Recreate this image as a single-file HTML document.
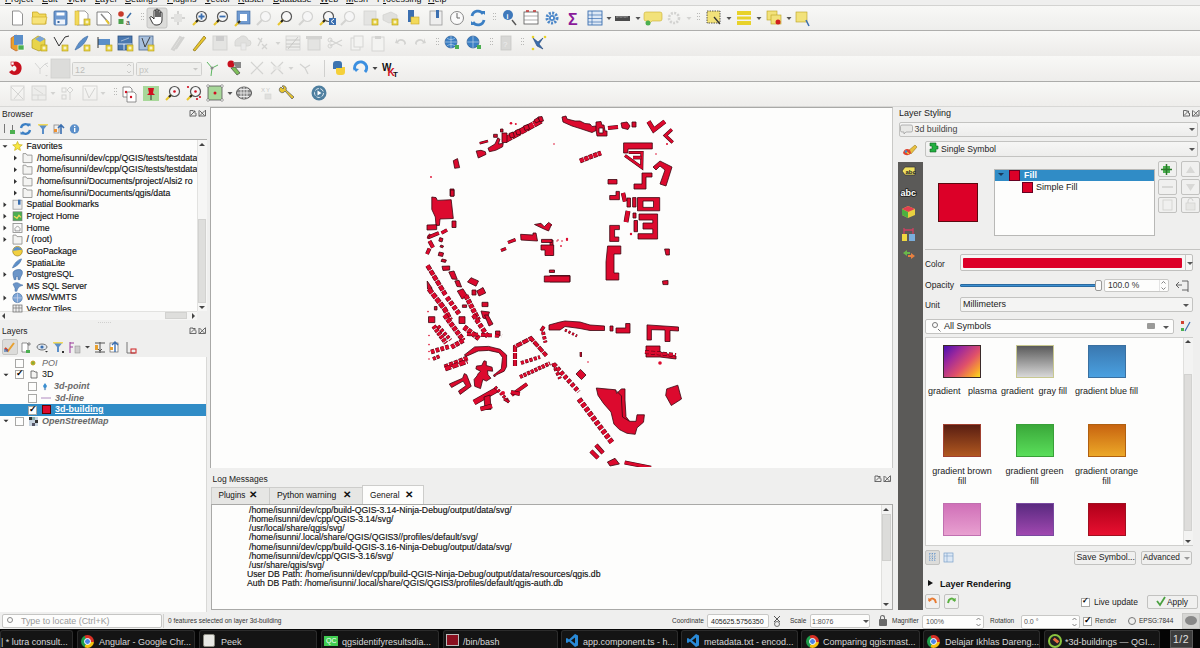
<!DOCTYPE html>
<html><head><meta charset="utf-8">
<style>
*{margin:0;padding:0;box-sizing:border-box}
html,body{width:1200px;height:648px;overflow:hidden;background:#efefee;font-family:"Liberation Sans",sans-serif;font-size:9px;color:#111}
.a{position:absolute}
.w{background:#fdfdfc}
.t{position:absolute;white-space:nowrap;line-height:1}
.hl{position:absolute;height:1px;background:#c9c9c7}
.vl{position:absolute;width:1px;background:#c9c9c7}
.fc,.fx{position:absolute;width:7px;height:7px;border:1px solid #777;border-top-color:#999}
.tri-u{position:absolute;width:0;height:0;border-left:3px solid transparent;border-right:3px solid transparent;border-bottom:3px solid #444}
.tri-d{position:absolute;width:0;height:0;border-left:3px solid transparent;border-right:3px solid transparent;border-top:3px solid #444}
.tri-l{position:absolute;width:0;height:0;border-top:3px solid transparent;border-bottom:3px solid transparent;border-right:3px solid #444}
.tri-r{position:absolute;width:0;height:0;border-top:3px solid transparent;border-bottom:3px solid transparent;border-left:3px solid #444}
.dd{position:absolute;width:0;height:0;border-left:3px solid transparent;border-right:3px solid transparent;border-top:3px solid #555}
.bt{position:absolute;left:0;width:197px;height:170px;overflow:hidden;font-size:8.7px;color:#111;-webkit-text-stroke:0.15px #111}
.cb{position:absolute;width:9px;height:9px;border:1px solid #a8a8a6;background:#fdfdfc}
.cb i{position:absolute;left:0px;top:-2px;font-style:normal;font-size:9px;color:#000;font-weight:bold;line-height:1}
.lg{position:absolute;font-size:8.7px;line-height:9.2px;color:#111;white-space:nowrap;-webkit-text-stroke:0.15px #111}
.btn{position:absolute;background:#f0f0ef;border:1px solid #c2c2c0;border-radius:2px}
.sw{position:absolute;width:37.5px;height:32.5px;border:1px solid #444}
.c{text-align:center;transform:translateX(-50%);line-height:10px}
.st{font-size:6.5px;color:#333}
.tb{position:absolute;top:630px;height:18px;background:#141414;border:1px solid #2c2c2c;border-bottom:none;border-radius:3px 3px 0 0}
.spin{position:absolute;width:7px;height:10px}
</style></head><body>
<!-- menu bar -->
<div class="t" style="left:5px;top:-5px;font-size:9px"><u>P</u>roject</div><div class="t" style="left:42px;top:-5px;font-size:9px"><u>E</u>dit</div><div class="t" style="left:67px;top:-5px;font-size:9px"><u>V</u>iew</div><div class="t" style="left:95px;top:-5px;font-size:9px"><u>L</u>ayer</div><div class="t" style="left:125px;top:-5px;font-size:9px"><u>S</u>ettings</div><div class="t" style="left:167px;top:-5px;font-size:9px"><u>P</u>lugins</div><div class="t" style="left:205px;top:-5px;font-size:9px"><u>V</u>ector</div><div class="t" style="left:238px;top:-5px;font-size:9px"><u>R</u>aster</div><div class="t" style="left:273px;top:-5px;font-size:9px"><u>D</u>atabase</div><div class="t" style="left:320px;top:-5px;font-size:9px"><u>W</u>eb</div><div class="t" style="left:346px;top:-5px;font-size:9px"><u>M</u>esh</div><div class="t" style="left:377px;top:-5px;font-size:9px">P<u>r</u>ocessing</div><div class="t" style="left:428px;top:-5px;font-size:9px"><u>H</u>elp</div>
<div class="a" style="left:0;top:5px;width:1200px;height:1px;background:#d3d3d1"></div>
<div class="a" style="left:0;top:6px;width:1200px;height:24px;background:linear-gradient(#f8f8f6,#eeeeec)"></div>
<div class="a" style="left:0;top:30px;width:1200px;height:1px;background:#aeaeac"></div>
<div class="a" style="left:0;top:31px;width:1200px;height:25px;background:linear-gradient(#f8f8f6,#ecebe9)"></div>
<div class="a" style="left:0;top:56px;width:1200px;height:25px;background:linear-gradient(#f8f8f6,#eeedeb)"></div>
<div class="a" style="left:0;top:81px;width:1200px;height:1px;background:#acacaa"></div>
<div class="a" style="left:0;top:82px;width:1200px;height:25px;background:linear-gradient(#f8f8f6,#eeedeb)"></div>
<div class="a" style="left:0;top:106px;width:1200px;height:1px;background:#d8d8d6"></div>
<!-- map canvas -->
<div class="a w" style="left:210px;top:107px;width:683px;height:361px;border-left:1px solid #a9a9a7;border-top:1px solid #a9a9a7;border-right:1px solid #c9c9c7"></div>

<svg class="a" style="left:0;top:0" width="1200" height="108" viewBox="0 0 1200 108"><path d="M12.5 11.0h7l3 3v11h-10z" fill="#fff" stroke="#777" stroke-width="0.8"/>
<path d="M32.5 12.0h5l1.5 2h7v10h-13.5z" fill="#f2d95a" stroke="#c9a824" stroke-width="0.8"/>
<path d="M32.0 17.0h15l-2 7h-13z" fill="#f7e37a" stroke="#c9a824" stroke-width="0.6"/>
<rect x="54.0" y="11.0" width="13" height="14" rx="1" fill="#6f9ad0" stroke="#3b679e" stroke-width="0.8"/>
<rect x="56.5" y="12.5" width="8" height="3" fill="#fff"/>
<rect x="56.0" y="19.5" width="9" height="5" fill="#eef3fa"/><rect x="57.5" y="21.0" width="2" height="2" fill="#3b679e"/>
<path d="M77 11h8l3 3v11h-11z" fill="#fff" stroke="#777" stroke-width="0.7"/><rect x="75" y="11" width="4" height="14" fill="#f2d95a" stroke="#c9a824" stroke-width="0.5"/>
<rect x="84.0" y="19.0" width="6" height="6" fill="#e8d44a" stroke="#b59a10" stroke-width="0.6"/>
<path d="M85.5 22.0h3M87.0 20.5v3" stroke="#fff" stroke-width="0.9"/>
<path d="M97 12h11l3 3v10h-14z" fill="#fff" stroke="#666" stroke-width="0.8"/><path d="M101 14l8 9" stroke="#888" stroke-width="1.5"/><path d="M106 20l3 4" stroke="#e8c62e" stroke-width="2"/>
<circle cx="121" cy="14" r="2.8" fill="#c83a2a"/><rect x="118.5" y="19" width="5" height="5" fill="#49a04a"/><path d="M127 18l4-5" stroke="#3a6fa8" stroke-width="1.5"/>
<text x="126.0" y="25.0" font-family="Liberation Sans" font-size="7" fill="#333" font-weight="normal">a</text>
<rect x="141" y="13" width="1" height="1" fill="#b9b9b7"/><rect x="143" y="13" width="1" height="1" fill="#b9b9b7"/>
<rect x="141" y="16" width="1" height="1" fill="#b9b9b7"/><rect x="143" y="16" width="1" height="1" fill="#b9b9b7"/>
<rect x="141" y="19" width="1" height="1" fill="#b9b9b7"/><rect x="143" y="19" width="1" height="1" fill="#b9b9b7"/>
<rect x="147.0" y="8.0" width="20" height="20" rx="2" fill="#dcdcda" stroke="#bdbdbb" stroke-width="0.8"/>
<path d="M154.0 19.0v-8c0-1.5 2-1.5 2 0v6v-7c0-1.5 2-1.5 2 0v7v-6c0-1.5 2-1.5 2 0v6v-4c0-1.5 2-1.5 2 0v7c0 3-2 5-5 5h-1c-2 0-3-1-4-3l-2-4c-.5-1 1-2 2-1z" fill="#fff" stroke="#222" stroke-width="0.9"/>
<path d="M178 11v14M171 18h14" stroke="#d3d3d1" stroke-width="2"/><rect x="174" y="14" width="8" height="8" fill="#e2e2e0"/>
<circle cx="201.5" cy="16.5" r="5" fill="#f6f6f6" stroke="#555" stroke-width="1.2"/>
<path d="M198.0 20.0l-5 5" stroke="#e8c62e" stroke-width="2.2"/><path d="M198.0 20.0l-2 2" stroke="#222" stroke-width="2.2"/>
<path d="M198.5 16.5h6M201.5 13.5v6" stroke="#3b6fb0" stroke-width="1.8"/>
<circle cx="222.5" cy="16.5" r="5" fill="#f6f6f6" stroke="#555" stroke-width="1.2"/>
<path d="M219.0 20.0l-5 5" stroke="#e8c62e" stroke-width="2.2"/><path d="M219.0 20.0l-2 2" stroke="#222" stroke-width="2.2"/>
<path d="M219.5 16.5h6" stroke="#3b6fb0" stroke-width="1.8"/>
<rect x="237" y="11" width="13" height="13" fill="#6f9ad0" stroke="#3b679e" stroke-width="0.6"/><rect x="240" y="14" width="7" height="7" fill="#fff"/><path d="M235 26l5-5" stroke="#e8c62e" stroke-width="2.2"/><path d="M238 23l2-2" stroke="#222" stroke-width="2"/>
<circle cx="265.5" cy="16.5" r="5" fill="#f6f6f6" stroke="#d3d3d1" stroke-width="1.2"/>
<path d="M262.0 20.0l-5 5" stroke="#d3d3d1" stroke-width="2.2"/>
<circle cx="286.5" cy="16.5" r="5" fill="#f6f6f6" stroke="#555" stroke-width="1.2"/>
<path d="M283.0 20.0l-5 5" stroke="#e8c62e" stroke-width="2.2"/><path d="M283.0 20.0l-2 2" stroke="#222" stroke-width="2.2"/>
<circle cx="307.5" cy="16.5" r="5" fill="#f6f6f6" stroke="#d3d3d1" stroke-width="1.2"/>
<path d="M304.0 20.0l-5 5" stroke="#d3d3d1" stroke-width="2.2"/>
<circle cx="328.5" cy="16.5" r="5" fill="#f6f6f6" stroke="#555" stroke-width="1.2"/>
<path d="M325.0 20.0l-5 5" stroke="#e8c62e" stroke-width="2.2"/><path d="M325.0 20.0l-2 2" stroke="#222" stroke-width="2.2"/>
<rect x="329" y="18" width="7" height="7" fill="#3b6fb0"/><path d="M334 19l-3 2.5l3 2.5" stroke="#fff" fill="none" stroke-width="1"/>
<circle cx="349.5" cy="16.5" r="5" fill="#f6f6f6" stroke="#d3d3d1" stroke-width="1.2"/>
<path d="M346.0 20.0l-5 5" stroke="#d3d3d1" stroke-width="2.2"/>
<rect x="364" y="11" width="12" height="14" fill="#e4e4e2" stroke="#d3d3d1" stroke-width="0.8"/>
<rect x="372.0" y="19.0" width="6" height="6" fill="#e8d44a" stroke="#b59a10" stroke-width="0.6"/>
<path d="M373.5 22.0h3M375.0 20.5v3" stroke="#fff" stroke-width="0.9"/>
<path d="M383 15l8-3l6 3v6l-8 2l-6-3z" fill="#e0e0de" stroke="#d3d3d1" stroke-width="0.8"/>
<rect x="392.0" y="19.0" width="6" height="6" fill="#e8d44a" stroke="#b59a10" stroke-width="0.6"/>
<path d="M393.5 22.0h3M395.0 20.5v3" stroke="#fff" stroke-width="0.9"/>
<path d="M408 10h6v12h-6z" fill="#3b6fb0"/><rect x="411" y="17" width="8" height="7" fill="#f2d95a" stroke="#c9a824" stroke-width="0.6"/>
<rect x="430" y="11" width="12" height="14" fill="#eee" stroke="#999" stroke-width="0.8"/><rect x="436" y="10" width="3" height="8" fill="#3b6fb0"/>
<circle cx="457" cy="18" r="6.5" fill="#fafafa" stroke="#888" stroke-width="1"/><path d="M457 13v5h3" stroke="#666" stroke-width="1" fill="none"/>
<path d="M472 16a6 6 0 0 1 11-2" stroke="#3b7fc4" stroke-width="2.8" fill="none"/><path d="M484 20a6 6 0 0 1-11 2" stroke="#3b7fc4" stroke-width="2.8" fill="none"/><path d="M481 11l4 0l0 4z M475 25l-4 0l0-4z" fill="#3b7fc4"/>
<rect x="493" y="13" width="1" height="1" fill="#b9b9b7"/><rect x="495" y="13" width="1" height="1" fill="#b9b9b7"/>
<rect x="493" y="16" width="1" height="1" fill="#b9b9b7"/><rect x="495" y="16" width="1" height="1" fill="#b9b9b7"/>
<rect x="493" y="19" width="1" height="1" fill="#b9b9b7"/><rect x="495" y="19" width="1" height="1" fill="#b9b9b7"/>
<circle cx="508" cy="15" r="5" fill="#3f79bb"/><text x="506.5" y="18.5" font-size="7" font-weight="bold" fill="#fff" font-family="Liberation Sans">i</text><path d="M512 20l4 5" stroke="#555" stroke-width="1.4"/>
<rect x="524" y="12" width="14" height="12" fill="#fff" stroke="#555" stroke-width="0.8"/><path d="M524 16h14M524 20h14" stroke="#777" stroke-width="0.6"/><path d="M526 11h3M533 11h3" stroke="#c03030" stroke-width="1.5"/>
<circle cx="552" cy="18" r="5" fill="none" stroke="#4a86c8" stroke-width="3" stroke-dasharray="2 1.3"/><circle cx="552" cy="18" r="3" fill="#4a86c8"/><circle cx="552" cy="18" r="1.2" fill="#fff"/>
<text x="568.0" y="25.0" font-family="Liberation Sans" font-size="16" fill="#8a1a9a" font-weight="bold">&#931;</text>
<rect x="588" y="11" width="14" height="14" fill="#dde8f5" stroke="#3b6fb0" stroke-width="0.9"/><path d="M588 15h14M588 18.5h14M588 22h14M592 11v14" stroke="#3b6fb0" stroke-width="0.7"/>
<path d="M606.5 17.0h5l-2.5 3z" fill="#555"/>
<rect x="615" y="16" width="15" height="5" fill="#4a4a4a"/><path d="M617 16v2M619 16v1.5M621 16v2M623 16v1.5M625 16v2M627 16v1.5" stroke="#ddd" stroke-width="0.6"/>
<path d="M635.5 17.0h5l-2.5 3z" fill="#555"/>
<path d="M646 12h14a2 2 0 0 1 2 2v5a2 2 0 0 1-2 2h-8l-3 3v-3h-3a2 2 0 0 1-2-2v-5a2 2 0 0 1 2-2z" fill="#f2e27a" stroke="#c9b030" stroke-width="0.6"/><circle cx="648" cy="23" r="2.5" fill="#4caf50"/>
<circle cx="674" cy="18" r="5" fill="none" stroke="#d3d3d1" stroke-width="2.6" stroke-dasharray="2 1.3"/>
<path d="M686.5 17.0h5l-2.5 3z" fill="#d3d3d1"/>
<rect x="697" y="13" width="1" height="1" fill="#b9b9b7"/><rect x="699" y="13" width="1" height="1" fill="#b9b9b7"/>
<rect x="697" y="16" width="1" height="1" fill="#b9b9b7"/><rect x="699" y="16" width="1" height="1" fill="#b9b9b7"/>
<rect x="697" y="19" width="1" height="1" fill="#b9b9b7"/><rect x="699" y="19" width="1" height="1" fill="#b9b9b7"/>
<rect x="707" y="11" width="13" height="12" fill="#f2e27a" stroke="#333" stroke-width="0.8" stroke-dasharray="1.5 1"/><path d="M714 17l6 7" stroke="#333" stroke-width="1.3"/>
<path d="M726.5 17.0h5l-2.5 3z" fill="#555"/>
<rect x="737" y="11" width="14" height="4" fill="#e8d22a"/><rect x="737" y="16.5" width="14" height="3" fill="#e8d22a"/><rect x="737" y="21" width="14" height="4" fill="#e8d22a"/>
<path d="M756.5 17.0h5l-2.5 3z" fill="#555"/>
<rect x="767" y="11" width="10" height="9" fill="#f2e27a" stroke="#b9a020" stroke-width="0.6"/><rect x="771" y="15" width="10" height="9" fill="#f2e27a" stroke="#b9a020" stroke-width="0.6"/><circle cx="778" cy="22" r="2.5" fill="#d02020"/>
<path d="M786.5 17.0h5l-2.5 3z" fill="#555"/>
<rect x="796" y="12" width="11" height="10" fill="#f2e27a" stroke="#b9a020" stroke-width="0.6"/><path d="M806 20l3 6" stroke="#3b6fb0" stroke-width="1.5"/>
<path d="M11 38l5-3l6 2v11l-6 3l-5-3z" fill="#e8a030" stroke="#b05020" stroke-width="0.6"/><rect x="14" y="35" width="9" height="10" fill="#5b8fc9"/><rect x="18" y="45" width="6" height="5" fill="#4caf50" stroke="#fff" stroke-width="0.6"/>
<path d="M32 40l6-4l7 3v9l-6 3l-7-3z" fill="#e8d44a" stroke="#a08a10" stroke-width="0.6"/><path d="M35 39l5-3l5 3l-5 3z" fill="#7aa4d6"/>
<rect x="41.0" y="45.0" width="6" height="6" fill="#e8d44a" stroke="#b59a10" stroke-width="0.6"/>
<path d="M42.5 48.0h3M44.0 46.5v3" stroke="#fff" stroke-width="0.9"/>
<path d="M54 37l5 9l6-9l4-1" stroke="#333" stroke-width="1" fill="none"/>
<rect x="62.0" y="45.0" width="6" height="6" fill="#e8d44a" stroke="#b59a10" stroke-width="0.6"/>
<path d="M63.5 48.0h3M65.0 46.5v3" stroke="#fff" stroke-width="0.9"/>
<path d="M75 50c3-7 7-12 13-14c-2 6-6 11-13 14z" fill="#5b8fc9" stroke="#3b679e" stroke-width="0.6"/>
<rect x="84.0" y="45.0" width="6" height="6" fill="#e8d44a" stroke="#b59a10" stroke-width="0.6"/>
<path d="M85.5 48.0h3M87.0 46.5v3" stroke="#fff" stroke-width="0.9"/>
<rect x="98" y="39" width="12" height="6" fill="#5b8fc9"/><path d="M98 37v11" stroke="#333" stroke-width="1"/>
<rect x="106.0" y="45.0" width="6" height="6" fill="#e8d44a" stroke="#b59a10" stroke-width="0.6"/>
<path d="M107.5 48.0h3M109.0 46.5v3" stroke="#fff" stroke-width="0.9"/>
<rect x="118" y="36" width="14" height="14" fill="#4a78b0" stroke="#2c5080" stroke-width="0.8"/><path d="M118 44h14M124 44v6" stroke="#fff" stroke-width="0.8"/><path d="M121 41l8-3" stroke="#bcd" stroke-width="0.8"/>
<rect x="127.0" y="45.0" width="6" height="6" fill="#e8d44a" stroke="#b59a10" stroke-width="0.6"/>
<path d="M128.5 48.0h3M130.0 46.5v3" stroke="#fff" stroke-width="0.9"/>
<rect x="139" y="36" width="14" height="14" fill="#a8c0dc" stroke="#4a6890" stroke-width="0.8"/><path d="M142 38l3 9l5-10" stroke="#333" stroke-width="0.9" fill="none"/>
<rect x="148.0" y="45.0" width="6" height="6" fill="#e8d44a" stroke="#b59a10" stroke-width="0.6"/>
<path d="M149.5 48.0h3M151.0 46.5v3" stroke="#fff" stroke-width="0.9"/>
<path d="M172 49l8-12l2 1l-8 12z M176 49l8-12" stroke="#d3d3d1" stroke-width="2" fill="none"/>
<path d="M193 50l11-14l2 2l-11 13z" fill="#e8c62e" stroke="#8a7010" stroke-width="0.7"/>
<rect x="213" y="36" width="14" height="14" fill="#e4e4e2" stroke="#d3d3d1" stroke-width="1"/><rect x="216" y="36" width="8" height="5" fill="#ccc"/>
<path d="M235 44a5 5 0 0 1 4-6a5 5 0 0 1 9 2a3 3 0 0 1 0 6h-13z" fill="#e0e0de" stroke="#d3d3d1" stroke-width="0.8"/><rect x="241" y="43" width="5" height="7" fill="#eaeaea" stroke="#d3d3d1" stroke-width="0.6"/>
<path d="M258 38l4 4M262 38l-4 8M262 44l5 5M267 44l-5 5" stroke="#d3d3d1" stroke-width="1.3"/>
<path d="M275.5 42.0h5l-2.5 3z" fill="#d3d3d1"/>
<rect x="286" y="36" width="14" height="14" fill="#ededeb" stroke="#d3d3d1" stroke-width="0.8"/><path d="M286 40h14M286 44h14M286 47h14M288 49l10-12" stroke="#c4c4c2" stroke-width="0.9"/>
<rect x="308" y="39" width="12" height="11" fill="#e4e4e2" stroke="#d3d3d1" stroke-width="1"/><rect x="306" y="36" width="16" height="3" fill="#d3d3d1"/>
<path d="M330 40l12 6M330 46l12-6" stroke="#d3d3d1" stroke-width="1.2"/><circle cx="330" cy="40" r="2" fill="none" stroke="#d3d3d1"/><circle cx="330" cy="46" r="2" fill="none" stroke="#d3d3d1"/>
<rect x="351" y="38" width="9" height="12" fill="#f3f3f1" stroke="#d3d3d1" stroke-width="0.9"/><rect x="354" y="36" width="9" height="11" fill="#f3f3f1" stroke="#d3d3d1" stroke-width="0.9"/>
<rect x="372" y="37" width="12" height="14" fill="#f3f3f1" stroke="#d3d3d1" stroke-width="0.9"/><rect x="375" y="36" width="6" height="3" fill="#d3d3d1"/>
<path d="M415 44a5 5 0 0 1 9-3v-3l2 5l-5 1l2-1a3 3 0 0 0-6 2z" fill="#d3d3d1"/>
<path d="M406 44a5 5 0 0 0-9-3v-3l-2 5l5 1l-2-1a3 3 0 0 1 6 2z" fill="#d3d3d1"/>
<rect x="436" y="38" width="1" height="1" fill="#b9b9b7"/><rect x="438" y="38" width="1" height="1" fill="#b9b9b7"/>
<rect x="436" y="41" width="1" height="1" fill="#b9b9b7"/><rect x="438" y="41" width="1" height="1" fill="#b9b9b7"/>
<rect x="436" y="44" width="1" height="1" fill="#b9b9b7"/><rect x="438" y="44" width="1" height="1" fill="#b9b9b7"/>
<circle cx="451" cy="42" r="6" fill="#3b7fc4" stroke="#1d4f8a" stroke-width="0.6"/><path d="M445 42h12M451 36v12M447 38c2 2 6 2 8 0M447 46c2-2 6-2 8 0" stroke="#cde" stroke-width="0.6" fill="none"/><rect x="455" y="45" width="4" height="4" fill="#4caf50"/>
<circle cx="473" cy="42" r="6" fill="#3b7fc4" stroke="#1d4f8a" stroke-width="0.6"/><path d="M467 42h12M473 36v12" stroke="#cde" stroke-width="0.6"/><rect x="477" y="45" width="4" height="4" fill="#4caf50"/>
<rect x="490" y="38" width="1" height="1" fill="#b9b9b7"/><rect x="492" y="38" width="1" height="1" fill="#b9b9b7"/>
<rect x="490" y="41" width="1" height="1" fill="#b9b9b7"/><rect x="492" y="41" width="1" height="1" fill="#b9b9b7"/>
<rect x="490" y="44" width="1" height="1" fill="#b9b9b7"/><rect x="492" y="44" width="1" height="1" fill="#b9b9b7"/>
<rect x="501" y="36" width="10" height="14" fill="#d8d8d6" stroke="#c8c8c6" stroke-width="0.8"/><text x="503" y="47" font-size="8" fill="#eee" font-family="Liberation Sans">?</text>
<rect x="521" y="38" width="1" height="1" fill="#b9b9b7"/><rect x="523" y="38" width="1" height="1" fill="#b9b9b7"/>
<rect x="521" y="41" width="1" height="1" fill="#b9b9b7"/><rect x="523" y="41" width="1" height="1" fill="#b9b9b7"/>
<rect x="521" y="44" width="1" height="1" fill="#b9b9b7"/><rect x="523" y="44" width="1" height="1" fill="#b9b9b7"/>
<path d="M533 38l5 4l5-4l-4 6l4 5l-6-3z" fill="#3b6fb0" stroke="#1d3f70" stroke-width="0.6"/><circle cx="533" cy="37" r="1.3" fill="#e8d22a"/><circle cx="545" cy="37" r="1.3" fill="#e8d22a"/><circle cx="533" cy="49" r="1.3" fill="#e8d22a"/>
<path d="M11 64c3-4 8-3 10 1c2 5-1 10-6 10c-3 0-5-2-6-3l3-2c1 1 2 2 3 1c2-1 2-4 0-5c-1-1-2 0-3 1z" fill="#c8101e"/><rect x="11" y="62" width="3" height="3" fill="#fff" stroke="#c8101e" stroke-width="0.6"/>
<path d="M35 63l5 6l5-5M40 69v5M45 64l3-1M45 64l3 3" stroke="#d3d3d1" stroke-width="0.9" fill="none"/>
<path d="M45 75h3l-1.5 1.5z" fill="#d3d3d1"/>
<rect x="51" y="59" width="19" height="19" fill="#dcdcda" stroke="#cfcfcd" stroke-width="0.8"/>
<rect x="72.5" y="62.5" width="61" height="13" rx="1" fill="#efefed" stroke="#d0d0ce" stroke-width="1"/>
<text x="75.0" y="72.5" font-family="Liberation Sans" font-size="9" fill="#bdbdbb" font-weight="normal">12</text>
<path d="M127 66l2-2l2 2M127 71l2 2l2-2" stroke="#c0c0be" stroke-width="0.8" fill="none"/>
<rect x="136.5" y="62.5" width="65" height="13" rx="1" fill="#efefed" stroke="#d0d0ce" stroke-width="1"/>
<text x="139.0" y="72.5" font-family="Liberation Sans" font-size="9" fill="#c4c4c2" font-weight="normal">px</text>
<path d="M193 68h5l-2.5 2.5z" fill="#c8c8c6"/>
<path d="M212 68l-5-6M212 68l6-3M212 68l-1 8" stroke="#4caf50" stroke-width="0.9"/><circle cx="212" cy="68" r="1.5" fill="#888"/>
<circle cx="231" cy="64" r="3.5" fill="#c8101e"/><path d="M233 62h8v6h-5z" fill="#888"/><path d="M231 68l6 7l3-2l-5-6z" fill="#7fbf5a" stroke="#333" stroke-width="0.6"/>
<path d="M251 62l12 12M263 62l-12 12" stroke="#d3d3d1" stroke-width="1.2"/>
<path d="M271 62l12 12M283 62l-12 12" stroke="#d3d3d1" stroke-width="1.2"/><path d="M273 68h8" stroke="#e8e8e6" stroke-width="3"/>
<path d="M288.5 67.0h5l-2.5 3z" fill="#d3d3d1"/>
<path d="M300 64l5 4l5-3M305 68l3 6" stroke="#d3d3d1" stroke-width="1.3" fill="none"/>
<rect x="324" y="60" width="1" height="17" fill="#d0d0ce"/>
<path d="M333 67v-3a3 3 0 0 1 3-3h3a3 3 0 0 1 3 3v4h-6v1h-3z" fill="#3c74b0"/><path d="M345 69v3a3 3 0 0 1-3 3h-3a3 3 0 0 1-3-3v-4h6v-1h3z" fill="#f5d03a"/>
<path d="M355 70a6 6 0 1 1 10 2" stroke="#3b8fe0" stroke-width="3" fill="none"/><path d="M353 68l3 4l3-3z" fill="#3b8fe0"/>
<path d="M372.5 67.0h5l-2.5 3z" fill="#444"/>
<text x="382.0" y="70.5" font-family="Liberation Sans" font-size="10" fill="#111" font-weight="bold">W</text>
<text x="387.5" y="76.0" font-family="Liberation Sans" font-size="10" fill="#d01020" font-weight="bold">K</text>
<text x="393.0" y="77.0" font-family="Liberation Sans" font-size="8" fill="#111" font-weight="bold">T</text>
<rect x="11" y="86" width="13" height="14" fill="none" stroke="#d3d3d1" stroke-width="0.9"/><path d="M11 87l12 12M14 99l10-12" stroke="#d3d3d1" stroke-width="1"/>
<rect x="32" y="86" width="14" height="14" fill="#ededeb" stroke="#d3d3d1" stroke-width="0.9"/><path d="M32 95h14M38 95v5M34 88l9 6" stroke="#d3d3d1" stroke-width="0.8"/>
<path d="M50.5 92.0h5l-2.5 3z" fill="#d3d3d1"/>
<rect x="62" y="88" width="4" height="4" fill="none" stroke="#d3d3d1"/><rect x="62" y="95" width="4" height="4" fill="none" stroke="#d3d3d1"/><path d="M70 87l3 3l-3 3l-3-3zM70 93v7" stroke="#d3d3d1" fill="none"/>
<rect x="83" y="86" width="14" height="14" fill="none" stroke="#d3d3d1" stroke-width="0.9"/><path d="M85 88l4 10l6-10" stroke="#d3d3d1" fill="none"/>
<path d="M100.5 92.0h5l-2.5 3z" fill="#d3d3d1"/>
<rect x="114" y="88" width="1" height="1" fill="#b9b9b7"/><rect x="116" y="88" width="1" height="1" fill="#b9b9b7"/>
<rect x="114" y="91" width="1" height="1" fill="#b9b9b7"/><rect x="116" y="91" width="1" height="1" fill="#b9b9b7"/>
<rect x="114" y="94" width="1" height="1" fill="#b9b9b7"/><rect x="116" y="94" width="1" height="1" fill="#b9b9b7"/>
<path d="M123 87h7l2 2v8h-9z" fill="#fff" stroke="#666" stroke-width="0.7"/><path d="M127 92h7l2 2v8h-9z" fill="#fff" stroke="#666" stroke-width="0.7"/><circle cx="126" cy="92" r="1.2" fill="#d01020"/><circle cx="131" cy="97" r="1.2" fill="#d01020"/>
<rect x="143" y="86" width="16" height="15" fill="#a8d89a"/><path d="M148 88h6l-1 5l2 2h-8l2-2z" fill="#d01020"/><path d="M151 95v5" stroke="#333" stroke-width="1"/>
<circle cx="174.5" cy="91.5" r="5" fill="#f6f6f6" stroke="#555" stroke-width="1.2"/>
<path d="M171.0 95.0l-5 5" stroke="#e8c62e" stroke-width="2.2"/><path d="M171.0 95.0l-2 2" stroke="#222" stroke-width="2.2"/>
<circle cx="174.5" cy="91.5" r="1.3" fill="#d01020"/>
<circle cx="195.5" cy="91.5" r="5" fill="#f6f6f6" stroke="#555" stroke-width="1.2"/>
<path d="M192.0 95.0l-5 5" stroke="#e8c62e" stroke-width="2.2"/><path d="M192.0 95.0l-2 2" stroke="#222" stroke-width="2.2"/>
<circle cx="195.5" cy="91.5" r="1.3" fill="#d01020"/>
<circle cx="188" cy="87" r="1.1" fill="#d01020"/><circle cx="197" cy="99" r="1.1" fill="#d01020"/><circle cx="200" cy="97" r="1.1" fill="#d01020"/>
<rect x="208" y="86" width="14" height="14" fill="#a8d89a" stroke="#555" stroke-width="0.8"/><circle cx="208" cy="86" r="1.3" fill="#fff" stroke="#555" stroke-width="0.5"/><circle cx="222" cy="86" r="1.3" fill="#fff" stroke="#555" stroke-width="0.5"/><circle cx="208" cy="100" r="1.3" fill="#fff" stroke="#555" stroke-width="0.5"/><circle cx="222" cy="100" r="1.3" fill="#fff" stroke="#555" stroke-width="0.5"/><circle cx="215" cy="93" r="1.5" fill="#d01020"/>
<path d="M227.5 92.0h5l-2.5 3z" fill="#555"/>
<ellipse cx="244" cy="93" rx="7.5" ry="6" fill="#888" stroke="#555" stroke-width="1"/><path d="M237 93h14M244 87v12M239 89.5h10M239 96.5h10M241 87.5v11M247 87.5v11" stroke="#eee" stroke-width="0.9"/>
<text x="261.0" y="92.0" font-family="Liberation Sans" font-size="6" fill="#c8c8c6" font-weight="normal">X</text>
<text x="266.0" y="92.0" font-family="Liberation Sans" font-size="6" fill="#c8c8c6" font-weight="normal">Y</text>
<rect x="265" y="94" width="6" height="5" fill="#e0e0de" stroke="#d3d3d1" stroke-width="0.6"/>
<path d="M281 87a3 3 0 1 0 4 4l7 8l2-2l-8-7a3 3 0 0 0-4-4l2 2l-1 1z" fill="#e8c62e" stroke="#555" stroke-width="0.7"/>
<circle cx="319" cy="93" r="7.5" fill="#4f7f9f"/><circle cx="319" cy="93" r="4.5" fill="none" stroke="#dde8f0" stroke-width="1" stroke-dasharray="4 1.5"/><path d="M317.5 90.5l4 2.5l-4 2.5z" fill="#fff"/></svg>
<svg class="a" style="left:0;top:0" width="1200" height="648" viewBox="0 0 1200 648"><defs><clipPath id="mc"><rect x="211" y="108" width="681" height="359"/></clipPath></defs><g clip-path="url(#mc)"><polyline points="505.0,140.0 520.0,132.0 530.0,126.5 541.0,120.5" fill="none" stroke="#3a0610" stroke-width="6.4" stroke-dasharray="7 0.7 9 0.7 6 0.7 8 0.7 20"/>
<polyline points="505.0,140.0 520.0,132.0 530.0,126.5 541.0,120.5" fill="none" stroke="#dc0a2e" stroke-width="5.4" stroke-dasharray="7 0.7 9 0.7 6 0.7 8 0.7 20"/>
<polygon points="502.0,133.0 507.0,133.0 507.0,142.5 502.0,142.5" fill="#dc0a2e" stroke="#3a0610" stroke-width="0.8"/>
<polygon points="509.0,133.5 513.0,132.0 514.5,137.0 510.5,138.0" fill="#dc0a2e" stroke="#3a0610" stroke-width="0.8"/>
<polygon points="515.5,130.5 519.5,129.0 521.0,134.0 517.0,135.0" fill="#dc0a2e" stroke="#3a0610" stroke-width="0.8"/>
<polygon points="523.5,126.0 528.0,124.5 529.5,129.0 525.0,130.5" fill="#dc0a2e" stroke="#3a0610" stroke-width="0.8"/>
<polygon points="534.0,120.0 538.0,117.5 540.0,121.0 536.0,123.0" fill="#dc0a2e" stroke="#3a0610" stroke-width="0.8"/>
<polygon points="538.0,117.0 542.0,116.5 543.5,121.0 540.0,122.0" fill="#dc0a2e" stroke="#3a0610" stroke-width="0.8"/>
<polygon points="488.0,148.2 495.0,144.0 497.8,137.8 499.9,139.2 498.5,144.0 503.3,143.3 502.6,146.8 495.7,150.3 489.4,151.7" fill="#dc0a2e" stroke="#3a0610" stroke-width="0.8"/>
<polygon points="476.2,151.0 481.0,150.3 485.3,151.7 486.0,154.4 478.3,158.0" fill="#dc0a2e" stroke="#3a0610" stroke-width="0.8"/>
<polyline points="479.7,143.3 488.0,141.0" fill="none" stroke="#3a0610" stroke-width="2.5"/>
<polyline points="479.7,143.3 488.0,141.0" fill="none" stroke="#dc0a2e" stroke-width="1.5"/>
<polygon points="493.6,134.3 497.3,134.3 497.3,137.3 493.6,137.3" fill="#dc0a2e" stroke="#3a0610" stroke-width="0.8"/>
<polygon points="500.5,129.0 503.0,129.0 503.0,132.0 500.5,132.0" fill="#dc0a2e" stroke="#3a0610" stroke-width="0.8"/>
<circle cx="511.0" cy="123.2" r="1.3" fill="#dc0a2e"/>
<circle cx="515.8" cy="123.9" r="1.0" fill="#dc0a2e"/>
<circle cx="554.0" cy="144.0" r="0.8" fill="#dc0a2e"/>
<polygon points="453.3,160.7 457.5,158.6 459.6,167.6 454.7,168.3" fill="#dc0a2e" stroke="#3a0610" stroke-width="0.8"/>
<circle cx="431.0" cy="177.0" r="0.9" fill="#dc0a2e"/>
<polygon points="450.0,189.0 454.0,189.0 454.0,196.0 450.0,196.0" fill="#dc0a2e" stroke="#3a0610" stroke-width="0.8"/>
<polygon points="562.0,117.0 566.0,116.0 567.0,119.0 575.0,121.0 580.0,121.0 585.0,123.5 590.0,124.0 592.0,126.5 596.0,126.0 597.0,130.0 592.0,132.5 580.0,128.5 572.0,126.0 563.0,122.0" fill="#dc0a2e" stroke="#3a0610" stroke-width="0.8"/>
<path d="M596 122L601 121.5L602 125L604 125L605 131L607 131L607 136L597 136L596 130ZM599 128L603 128L603 133L599 133Z" fill-rule="evenodd" fill="#dc0a2e" stroke="#3a0610" stroke-width="0.8"/>
<polyline points="608.0,128.0 618.0,127.0" fill="none" stroke="#3a0610" stroke-width="3.9"/>
<polyline points="608.0,128.0 618.0,127.0" fill="none" stroke="#dc0a2e" stroke-width="2.9"/>
<polygon points="621.0,123.0 627.0,122.0 630.0,126.0 628.0,129.5 622.0,128.0" fill="#dc0a2e" stroke="#3a0610" stroke-width="0.8"/>
<polygon points="632.0,122.0 636.0,122.0 636.0,127.0 632.0,127.0" fill="#dc0a2e" stroke="#3a0610" stroke-width="0.8"/>
<polyline points="648.5,121.5 653.7,130.0 664.8,121.5" fill="none" stroke="#3a0610" stroke-width="4.6"/>
<polyline points="648.5,121.5 653.7,130.0 664.8,121.5" fill="none" stroke="#dc0a2e" stroke-width="3.6"/>
<polyline points="671.8,129.4 665.3,135.5 672.7,142.4" fill="none" stroke="#3a0610" stroke-width="3.4"/>
<polyline points="671.8,129.4 665.3,135.5 672.7,142.4" fill="none" stroke="#dc0a2e" stroke-width="2.4"/>
<circle cx="667.0" cy="144.0" r="1.0" fill="#dc0a2e"/>
<polygon points="623.6,142.9 652.3,142.9 652.3,148.9 628.0,149.0 627.8,153.0 623.6,153.0" fill="#dc0a2e" stroke="#3a0610" stroke-width="0.8"/>
<polyline points="628.7,152.5 642.0,152.5 641.7,167.5 625.0,155.5" fill="none" stroke="#3a0610" stroke-width="3.2"/>
<polyline points="628.7,152.5 642.0,152.5 641.7,167.5 625.0,155.5" fill="none" stroke="#dc0a2e" stroke-width="2.2"/>
<polyline points="633.0,157.6 641.5,157.6" fill="none" stroke="#3a0610" stroke-width="3.6"/>
<polyline points="633.0,157.6 641.5,157.6" fill="none" stroke="#dc0a2e" stroke-width="2.6"/>
<polyline points="580.0,161.0 590.0,157.0 601.0,153.0" fill="none" stroke="#3a0610" stroke-width="4.9" stroke-dasharray="4 0.8"/>
<polyline points="580.0,161.0 590.0,157.0 601.0,153.0" fill="none" stroke="#dc0a2e" stroke-width="3.9" stroke-dasharray="4 0.8"/>
<circle cx="656.0" cy="154.0" r="0.8" fill="#dc0a2e"/>
<polygon points="653.0,167.0 660.0,161.0 672.0,167.0 666.0,186.0 660.0,184.0 665.0,170.0 660.0,166.0 656.0,170.0" fill="#dc0a2e" stroke="#3a0610" stroke-width="0.8"/>
<polygon points="642.0,173.0 652.0,173.0 652.0,177.0 646.0,177.0 646.0,189.0 634.0,189.0 634.0,184.0 642.0,184.0" fill="#dc0a2e" stroke="#3a0610" stroke-width="0.8"/>
<polygon points="608.0,179.5 617.0,179.5 617.0,184.0 608.0,184.0" fill="#dc0a2e" stroke="#3a0610" stroke-width="0.8"/>
<polygon points="609.7,195.5 616.0,195.5 616.0,191.4 619.4,191.4 619.4,199.7 609.7,199.7" fill="#dc0a2e" stroke="#3a0610" stroke-width="0.8"/>
<polyline points="623.0,193.0 625.0,201.5" fill="none" stroke="#3a0610" stroke-width="4.4"/>
<polyline points="623.0,193.0 625.0,201.5" fill="none" stroke="#dc0a2e" stroke-width="3.4"/>
<polygon points="627.0,198.0 630.5,198.0 630.5,207.0 627.0,207.0" fill="#dc0a2e" stroke="#3a0610" stroke-width="0.8"/>
<polygon points="632.6,197.6 636.0,197.6 636.0,207.0 632.6,207.0" fill="#dc0a2e" stroke="#3a0610" stroke-width="0.8"/>
<path d="M637.5 197.6H659.7V210.8H637.5ZM643 201V207.4H653.5V201Z" fill-rule="evenodd" fill="#dc0a2e" stroke="#3a0610" stroke-width="0.8"/>
<polyline points="628.0,211.0 626.0,222.0" fill="none" stroke="#3a0610" stroke-width="4.9"/>
<polyline points="628.0,211.0 626.0,222.0" fill="none" stroke="#dc0a2e" stroke-width="3.9"/>
<polygon points="633.0,213.0 636.0,213.0 636.0,218.0 633.0,218.0" fill="#dc0a2e" stroke="#3a0610" stroke-width="0.8"/>
<polygon points="639.0,214.0 657.6,214.0 657.6,239.0 638.0,239.0 638.0,233.7 652.8,233.7 652.8,229.0 643.0,229.0 643.0,223.0 652.8,223.0 652.8,220.0 639.0,220.0" fill="#dc0a2e" stroke="#3a0610" stroke-width="0.8"/>
<polygon points="634.0,220.5 637.5,220.5 637.5,231.7 634.0,231.7" fill="#dc0a2e" stroke="#3a0610" stroke-width="0.8"/>
<circle cx="631.0" cy="234.0" r="1.2" fill="#dc0a2e"/>
<polygon points="609.7,225.4 619.4,225.4 619.4,229.6 614.6,229.6 614.6,237.0 618.8,237.0 618.8,241.4 609.7,241.4" fill="#dc0a2e" stroke="#3a0610" stroke-width="0.8"/>
<polygon points="607.6,246.0 620.8,246.0 620.8,254.0 614.0,254.0 614.0,273.0 618.8,273.0 618.8,280.0 606.0,280.0 606.0,262.0" fill="#dc0a2e" stroke="#3a0610" stroke-width="0.8"/>
<polygon points="664.6,249.0 669.4,249.0 669.4,255.0 666.0,255.0" fill="#dc0a2e" stroke="#3a0610" stroke-width="0.8"/>
<circle cx="551.0" cy="225.0" r="1.0" fill="#dc0a2e"/>
<circle cx="558.0" cy="240.0" r="0.8" fill="#dc0a2e"/>
<circle cx="562.0" cy="241.0" r="0.8" fill="#dc0a2e"/>
<circle cx="567.0" cy="239.0" r="1.2" fill="#dc0a2e"/>
<circle cx="561.0" cy="246.0" r="0.8" fill="#dc0a2e"/>
<polygon points="550.0,240.0 553.0,240.0 553.0,255.0 550.0,255.0" fill="#dc0a2e" stroke="#3a0610" stroke-width="0.8"/>
<polygon points="550.0,275.5 570.0,275.5 570.0,281.8 550.0,281.8" fill="#dc0a2e" stroke="#3a0610" stroke-width="0.8"/>
<polygon points="662.5,281.0 668.0,280.4 668.0,284.6 663.0,284.6" fill="#dc0a2e" stroke="#3a0610" stroke-width="0.8"/>
<polyline points="501.0,250.5 506.0,248.5" fill="none" stroke="#3a0610" stroke-width="3.1"/>
<polyline points="501.0,250.5 506.0,248.5" fill="none" stroke="#dc0a2e" stroke-width="2.1"/>
<polyline points="508.0,242.5 515.5,239.6" fill="none" stroke="#3a0610" stroke-width="3.3"/>
<polyline points="508.0,242.5 515.5,239.6" fill="none" stroke="#dc0a2e" stroke-width="2.3"/>
<polygon points="520.6,234.3 533.0,235.0 533.0,233.0 536.0,233.0 537.5,241.0 521.0,240.0" fill="#dc0a2e" stroke="#3a0610" stroke-width="0.8"/>
<polygon points="534.5,224.5 541.0,223.3 544.3,226.7 548.6,222.4 551.5,224.5 548.6,231.0 544.3,229.2" fill="#dc0a2e" stroke="#3a0610" stroke-width="0.8"/>
<polygon points="541.5,239.4 552.0,239.4 552.0,242.5 541.5,242.5" fill="#dc0a2e" stroke="#3a0610" stroke-width="0.8"/>
<polygon points="541.0,245.0 553.7,245.0 553.7,255.5 545.0,255.5 545.0,250.0 541.0,250.0" fill="#dc0a2e" stroke="#3a0610" stroke-width="0.8"/>
<circle cx="557.0" cy="241.0" r="0.7" fill="#dc0a2e"/>
<circle cx="561.0" cy="246.0" r="0.7" fill="#dc0a2e"/>
<circle cx="567.0" cy="240.0" r="1.1" fill="#dc0a2e"/>
<polygon points="544.3,276.0 569.8,276.0 569.8,282.0 544.3,282.0" fill="#dc0a2e" stroke="#3a0610" stroke-width="0.8"/>
<polygon points="549.4,270.0 554.5,270.0 554.5,272.5 549.4,272.5" fill="#dc0a2e" stroke="#3a0610" stroke-width="0.8"/>
<polygon points="431.8,197.0 436.0,197.6 437.4,200.4 451.2,199.7 453.3,218.5 440.0,219.0 439.4,225.4 436.0,225.4 435.3,217.0 431.8,209.4" fill="#dc0a2e" stroke="#3a0610" stroke-width="0.8"/>
<polygon points="427.0,225.0 436.7,224.7 436.7,229.6 427.0,230.0" fill="#dc0a2e" stroke="#3a0610" stroke-width="0.8"/>
<polygon points="452.0,221.0 456.0,221.0 456.0,227.5 452.0,227.5" fill="#dc0a2e" stroke="#3a0610" stroke-width="0.8"/>
<polygon points="450.5,190.0 454.0,190.0 454.0,196.2 450.5,196.2" fill="#dc0a2e" stroke="#3a0610" stroke-width="0.8"/>
<polyline points="441.5,233.0 447.0,230.0" fill="none" stroke="#3a0610" stroke-width="3.7"/>
<polyline points="441.5,233.0 447.0,230.0" fill="none" stroke="#dc0a2e" stroke-width="2.7"/>
<polyline points="428.0,237.5 438.8,233.0" fill="none" stroke="#3a0610" stroke-width="3.9"/>
<polyline points="428.0,237.5 438.8,233.0" fill="none" stroke="#dc0a2e" stroke-width="2.9"/>
<polyline points="427.5,238.5 430.0,234.0" fill="none" stroke="#3a0610" stroke-width="1.9"/>
<polyline points="427.5,238.5 430.0,234.0" fill="none" stroke="#dc0a2e" stroke-width="0.9"/>
<polyline points="429.5,241.0 433.0,247.5" fill="none" stroke="#3a0610" stroke-width="4.1"/>
<polyline points="429.5,241.0 433.0,247.5" fill="none" stroke="#dc0a2e" stroke-width="3.1"/>
<polyline points="427.0,254.0 429.5,248.5" fill="none" stroke="#3a0610" stroke-width="3.9"/>
<polyline points="427.0,254.0 429.5,248.5" fill="none" stroke="#dc0a2e" stroke-width="2.9"/>
<polygon points="439.8,237.6 443.0,238.6 442.0,242.0 438.8,241.0" fill="#dc0a2e" stroke="#3a0610" stroke-width="0.8"/>
<polygon points="440.9,245.0 443.6,246.0 442.6,247.8 439.9,246.8" fill="#dc0a2e" stroke="#3a0610" stroke-width="0.8"/>
<polygon points="439.2,252.0 443.6,253.0 442.6,256.5 438.2,255.5" fill="#dc0a2e" stroke="#3a0610" stroke-width="0.8"/>
<polygon points="442.0,259.0 446.4,260.0 445.4,262.4 441.0,261.4" fill="#dc0a2e" stroke="#3a0610" stroke-width="0.8"/>
<polyline points="427.5,265.5 445.4,294.7" fill="none" stroke="#3a0610" stroke-width="4.7" stroke-dasharray="5 1"/>
<polyline points="427.5,265.5 445.4,294.7" fill="none" stroke="#dc0a2e" stroke-width="3.7" stroke-dasharray="5 1"/>
<polygon points="427.2,281.0 432.0,288.0 431.0,292.0 427.5,289.0" fill="#dc0a2e" stroke="#3a0610" stroke-width="0.8"/>
<polyline points="429.0,289.0 444.6,309.0 450.5,320.0" fill="none" stroke="#3a0610" stroke-width="5.1" stroke-dasharray="5 1"/>
<polyline points="429.0,289.0 444.6,309.0 450.5,320.0" fill="none" stroke="#dc0a2e" stroke-width="4.1" stroke-dasharray="5 1"/>
<polyline points="444.6,315.0 463.3,340.4" fill="none" stroke="#3a0610" stroke-width="5.1" stroke-dasharray="4 1"/>
<polyline points="444.6,315.0 463.3,340.4" fill="none" stroke="#dc0a2e" stroke-width="4.1" stroke-dasharray="4 1"/>
<polyline points="463.3,340.4 451.4,347.2" fill="none" stroke="#3a0610" stroke-width="4.9" stroke-dasharray="4 1"/>
<polyline points="463.3,340.4 451.4,347.2" fill="none" stroke="#dc0a2e" stroke-width="3.9" stroke-dasharray="4 1"/>
<polyline points="447.0,297.2 459.9,315.0" fill="none" stroke="#3a0610" stroke-width="4.9" stroke-dasharray="4 1.5"/>
<polyline points="447.0,297.2 459.9,315.0" fill="none" stroke="#dc0a2e" stroke-width="3.9" stroke-dasharray="4 1.5"/>
<polygon points="442.0,266.3 449.7,266.0 449.7,270.0 443.0,270.5" fill="#dc0a2e" stroke="#3a0610" stroke-width="0.8"/>
<polygon points="448.8,272.0 454.0,271.0 457.3,279.4 452.0,279.0" fill="#dc0a2e" stroke="#3a0610" stroke-width="0.8"/>
<polygon points="454.8,281.0 459.0,280.3 461.6,287.0 457.0,286.5" fill="#dc0a2e" stroke="#3a0610" stroke-width="0.8"/>
<polygon points="457.3,291.0 463.0,288.8 467.5,296.0 462.0,299.0" fill="#dc0a2e" stroke="#3a0610" stroke-width="0.8"/>
<polyline points="465.8,295.5 478.5,320.0" fill="none" stroke="#3a0610" stroke-width="5.1" stroke-dasharray="4 1"/>
<polyline points="465.8,295.5 478.5,320.0" fill="none" stroke="#dc0a2e" stroke-width="4.1" stroke-dasharray="4 1"/>
<polyline points="473.4,315.0 488.7,337.9" fill="none" stroke="#3a0610" stroke-width="4.9" stroke-dasharray="4 1.5"/>
<polyline points="473.4,315.0 488.7,337.9" fill="none" stroke="#dc0a2e" stroke-width="3.9" stroke-dasharray="4 1.5"/>
<polygon points="467.5,282.0 471.0,277.7 478.5,281.0 476.0,286.2" fill="#dc0a2e" stroke="#3a0610" stroke-width="0.8"/>
<polygon points="476.8,291.0 483.0,287.5 485.7,293.0 479.0,296.0" fill="#dc0a2e" stroke="#3a0610" stroke-width="0.8"/>
<polygon points="472.0,290.0 476.0,290.0 476.0,295.0 472.0,295.0" fill="#dc0a2e" stroke="#3a0610" stroke-width="0.8"/>
<polygon points="482.0,302.3 488.0,302.3 488.0,306.6 482.0,306.6" fill="#dc0a2e" stroke="#3a0610" stroke-width="0.8"/>
<polygon points="481.0,311.0 489.5,312.0 487.0,319.3 483.0,318.0" fill="#dc0a2e" stroke="#3a0610" stroke-width="0.8"/>
<polygon points="462.4,304.9 466.6,304.9 466.6,307.4 462.4,307.4" fill="#dc0a2e" stroke="#3a0610" stroke-width="0.8"/>
<circle cx="428.0" cy="311.6" r="0.8" fill="#dc0a2e"/>
<polygon points="434.4,306.5 437.0,306.5 437.0,310.0 434.4,310.0" fill="#dc0a2e" stroke="#3a0610" stroke-width="0.8"/>
<polygon points="428.5,316.7 434.8,316.7 434.8,322.6 428.5,322.6" fill="#dc0a2e" stroke="#3a0610" stroke-width="0.8"/>
<polygon points="459.0,316.7 465.0,316.7 465.0,323.5 459.0,323.5" fill="#dc0a2e" stroke="#3a0610" stroke-width="0.8"/>
<polyline points="464.0,327.0 479.4,338.8" fill="none" stroke="#3a0610" stroke-width="5.4" stroke-dasharray="4 1"/>
<polyline points="464.0,327.0 479.4,338.8" fill="none" stroke="#dc0a2e" stroke-width="4.4" stroke-dasharray="4 1"/>
<polygon points="484.5,315.0 488.0,315.0 493.0,324.0 489.0,326.0" fill="#dc0a2e" stroke="#3a0610" stroke-width="0.8"/>
<polygon points="495.5,331.0 500.0,331.0 500.0,336.0 495.5,336.0" fill="#dc0a2e" stroke="#3a0610" stroke-width="0.8"/>
<polyline points="433.6,326.0 446.0,343.0" fill="none" stroke="#3a0610" stroke-width="4.9" stroke-dasharray="3 1"/>
<polyline points="433.6,326.0 446.0,343.0" fill="none" stroke="#dc0a2e" stroke-width="3.9" stroke-dasharray="3 1"/>
<polyline points="438.0,326.0 450.5,340.0" fill="none" stroke="#3a0610" stroke-width="3.9" stroke-dasharray="3 1.5"/>
<polyline points="438.0,326.0 450.5,340.0" fill="none" stroke="#dc0a2e" stroke-width="2.9" stroke-dasharray="3 1.5"/>
<polyline points="431.0,352.0 449.7,346.4" fill="none" stroke="#3a0610" stroke-width="4.7" stroke-dasharray="3.5 1.5"/>
<polyline points="431.0,352.0 449.7,346.4" fill="none" stroke="#dc0a2e" stroke-width="3.7" stroke-dasharray="3.5 1.5"/>
<polyline points="433.0,359.0 440.0,356.0" fill="none" stroke="#3a0610" stroke-width="3.9" stroke-dasharray="3 1"/>
<polyline points="433.0,359.0 440.0,356.0" fill="none" stroke="#dc0a2e" stroke-width="2.9" stroke-dasharray="3 1"/>
<circle cx="429.0" cy="335.5" r="0.8" fill="#dc0a2e"/>
<circle cx="429.0" cy="344.6" r="0.8" fill="#dc0a2e"/>
<circle cx="429.0" cy="351.5" r="0.8" fill="#dc0a2e"/>
<circle cx="429.0" cy="359.0" r="0.8" fill="#dc0a2e"/>
<polyline points="444.6,367.0 467.5,358.0" fill="none" stroke="#3a0610" stroke-width="4.9" stroke-dasharray="4 1.2"/>
<polyline points="444.6,367.0 467.5,358.0" fill="none" stroke="#dc0a2e" stroke-width="3.9" stroke-dasharray="4 1.2"/>
<polygon points="464.3,355.0 474.7,346.9 488.6,346.4 500.2,349.3 506.6,355.0 506.6,366.6 504.2,371.2 496.7,374.7 494.4,377.0 493.5,375.0 495.6,373.6 501.3,368.9 502.5,357.4 499.0,352.7 488.6,350.4 478.2,351.0 466.6,356.2" fill="#dc0a2e" stroke="#3a0610" stroke-width="0.8"/>
<polygon points="484.0,360.8 486.3,361.4 486.3,365.5 492.1,367.2 492.7,371.2 487.5,370.7 488.0,374.7 490.9,378.2 486.3,381.1 482.8,379.4 480.5,388.6 474.7,386.3 474.1,379.4 477.0,375.9 478.2,373.6 480.5,371.2 475.9,368.9 476.5,366.0 481.7,365.5" fill="#dc0a2e" stroke="#3a0610" stroke-width="0.8"/>
<polyline points="515.0,366.0 515.0,346.7 531.0,338.3 546.4,355.7" fill="none" stroke="#3a0610" stroke-width="4.1" stroke-dasharray="6 1"/>
<polyline points="515.0,366.0 515.0,346.7 531.0,338.3 546.4,355.7" fill="none" stroke="#dc0a2e" stroke-width="3.1" stroke-dasharray="6 1"/>
<polyline points="521.0,363.0 540.0,357.0" fill="none" stroke="#3a0610" stroke-width="3.9" stroke-dasharray="3 1.5"/>
<polyline points="521.0,363.0 540.0,357.0" fill="none" stroke="#dc0a2e" stroke-width="2.9" stroke-dasharray="3 1.5"/>
<polyline points="520.0,377.0 550.0,363.3" fill="none" stroke="#3a0610" stroke-width="4.1" stroke-dasharray="3 1"/>
<polyline points="520.0,377.0 550.0,363.3" fill="none" stroke="#dc0a2e" stroke-width="3.1" stroke-dasharray="3 1"/>
<polyline points="511.7,395.0 527.0,384.0" fill="none" stroke="#3a0610" stroke-width="3.9"/>
<polyline points="511.7,395.0 527.0,384.0" fill="none" stroke="#dc0a2e" stroke-width="2.9"/>
<polyline points="474.1,402.5 496.7,389.8" fill="none" stroke="#3a0610" stroke-width="5.7"/>
<polyline points="474.1,402.5 496.7,389.8" fill="none" stroke="#dc0a2e" stroke-width="4.7"/>
<polygon points="484.0,397.0 490.0,395.0 491.0,409.4 485.0,409.4" fill="#dc0a2e" stroke="#3a0610" stroke-width="0.8"/>
<polyline points="480.5,409.0 492.0,406.0" fill="none" stroke="#3a0610" stroke-width="4.4"/>
<polyline points="480.5,409.0 492.0,406.0" fill="none" stroke="#dc0a2e" stroke-width="3.4"/>
<polyline points="495.0,387.0 509.0,402.0" fill="none" stroke="#3a0610" stroke-width="3.5" stroke-dasharray="2.5 1.5"/>
<polyline points="495.0,387.0 509.0,402.0" fill="none" stroke="#dc0a2e" stroke-width="2.5" stroke-dasharray="2.5 1.5"/>
<polygon points="449.3,384.0 462.6,378.2 464.3,373.6 466.6,374.7 471.2,386.3 460.2,394.4 458.5,391.0 466.0,385.7 463.1,381.1 451.6,387.5" fill="#dc0a2e" stroke="#3a0610" stroke-width="0.8"/>
<polyline points="445.2,368.9 467.2,361.4" fill="none" stroke="#3a0610" stroke-width="4.9" stroke-dasharray="6 1.5"/>
<polyline points="445.2,368.9 467.2,361.4" fill="none" stroke="#dc0a2e" stroke-width="3.9" stroke-dasharray="6 1.5"/>
<polyline points="467.0,334.0 502.0,336.0" fill="none" stroke="#3a0610" stroke-width="3.9" stroke-dasharray="4 3"/>
<polyline points="467.0,334.0 502.0,336.0" fill="none" stroke="#dc0a2e" stroke-width="2.9" stroke-dasharray="4 3"/>
<polyline points="543.0,332.0 545.5,342.5" fill="none" stroke="#3a0610" stroke-width="3.9" stroke-dasharray="3 1.5"/>
<polyline points="543.0,332.0 545.5,342.5" fill="none" stroke="#dc0a2e" stroke-width="2.9" stroke-dasharray="3 1.5"/>
<polyline points="553.0,363.3 560.0,378.6" fill="none" stroke="#3a0610" stroke-width="3.9" stroke-dasharray="3 2"/>
<polyline points="553.0,363.3 560.0,378.6" fill="none" stroke="#dc0a2e" stroke-width="2.9" stroke-dasharray="3 2"/>
<polygon points="549.0,325.0 560.0,322.0 565.0,321.0 580.0,322.0 590.0,325.0 604.5,326.0 604.5,330.5 590.0,330.5 580.0,328.5 565.0,326.5 560.0,330.0 549.0,330.0" fill="#dc0a2e" stroke="#3a0610" stroke-width="0.8"/>
<polyline points="541.0,331.0 544.0,326.5" fill="none" stroke="#3a0610" stroke-width="3.4"/>
<polyline points="541.0,331.0 544.0,326.5" fill="none" stroke="#dc0a2e" stroke-width="2.4"/>
<polyline points="565.0,330.0 577.0,336.0" fill="none" stroke="#3a0610" stroke-width="2.9" stroke-dasharray="2 2"/>
<polyline points="565.0,330.0 577.0,336.0" fill="none" stroke="#dc0a2e" stroke-width="1.9" stroke-dasharray="2 2"/>
<polygon points="610.0,326.0 613.0,326.0 613.0,331.0 610.0,331.0" fill="#dc0a2e" stroke="#3a0610" stroke-width="0.8"/>
<polygon points="625.7,323.5 630.0,323.5 630.0,333.0 616.0,333.0 616.0,328.0 625.7,328.0" fill="#dc0a2e" stroke="#3a0610" stroke-width="0.8"/>
<polygon points="647.0,324.9 678.5,327.0 678.5,331.0 670.0,330.5 670.0,341.5 665.0,341.5 665.0,330.0 651.4,329.7 651.4,340.0 647.0,340.0" fill="#dc0a2e" stroke="#3a0610" stroke-width="0.8"/>
<polygon points="646.0,346.0 660.0,346.0 660.0,352.0 676.0,356.0 676.0,359.0 660.0,357.0 646.0,357.0" fill="#dc0a2e" stroke="#3a0610" stroke-width="0.8"/>
<polyline points="581.0,352.0 581.0,357.0" fill="none" stroke="#3a0610" stroke-width="1.7"/>
<polyline points="581.0,352.0 581.0,357.0" fill="none" stroke="#dc0a2e" stroke-width="0.7"/>
<polygon points="596.3,388.0 615.7,389.8 616.7,393.5 621.3,388.9 625.0,388.9 625.0,400.0 626.0,416.7 629.6,421.3 636.0,421.3 637.0,414.8 644.4,414.8 643.5,422.2 637.0,427.8 635.2,434.3 626.9,433.3 619.4,429.6 613.9,424.0 611.0,412.0 603.7,403.7 598.0,395.4" fill="#dc0a2e" stroke="#3a0610" stroke-width="0.8"/>
<path d="M616 390.5L621.5 396L621.5 400L622.5 417L629.6 421.3" fill="none" stroke="#3a0610" stroke-width="0.8"/>
<polygon points="666.7,388.9 677.8,385.2 681.5,399.0 671.3,405.5 665.7,395.4" fill="#dc0a2e" stroke="#3a0610" stroke-width="0.8"/>
<polygon points="580.5,369.4 586.0,375.0 581.5,379.6 576.0,374.0" fill="#dc0a2e" stroke="#3a0610" stroke-width="0.8"/>
<polyline points="553.7,364.0 578.7,391.7" fill="none" stroke="#3a0610" stroke-width="4.7" stroke-dasharray="3.5 1.8"/>
<polyline points="553.7,364.0 578.7,391.7" fill="none" stroke="#dc0a2e" stroke-width="3.7" stroke-dasharray="3.5 1.8"/>
<polyline points="579.0,399.0 612.3,443.0" fill="none" stroke="#3a0610" stroke-width="5.5" stroke-dasharray="4 1.6"/>
<polyline points="579.0,399.0 612.3,443.0" fill="none" stroke="#dc0a2e" stroke-width="4.5" stroke-dasharray="4 1.6"/>
<polyline points="596.0,445.0 603.0,453.0" fill="none" stroke="#3a0610" stroke-width="4.4"/>
<polyline points="596.0,445.0 603.0,453.0" fill="none" stroke="#dc0a2e" stroke-width="3.4"/>
<polyline points="591.0,451.0 598.0,458.0" fill="none" stroke="#3a0610" stroke-width="4.4"/>
<polyline points="591.0,451.0 598.0,458.0" fill="none" stroke="#dc0a2e" stroke-width="3.4"/>
<polygon points="607.4,462.0 615.0,458.3 619.4,464.0 610.0,466.0" fill="#dc0a2e" stroke="#3a0610" stroke-width="0.8"/>
<polyline points="624.7,462.5 651.0,467.6" fill="none" stroke="#3a0610" stroke-width="3.9"/>
<polyline points="624.7,462.5 651.0,467.6" fill="none" stroke="#dc0a2e" stroke-width="2.9"/>
<polyline points="645.0,352.0 676.0,355.0" fill="none" stroke="#3a0610" stroke-width="3.9" stroke-dasharray="4 2"/>
<polyline points="645.0,352.0 676.0,355.0" fill="none" stroke="#dc0a2e" stroke-width="2.9" stroke-dasharray="4 2"/>
<circle cx="660.0" cy="363.0" r="1.8" fill="#dc0a2e"/>
<polyline points="511.0,392.0 519.8,394.0" fill="none" stroke="#3a0610" stroke-width="3.9"/>
<polyline points="511.0,392.0 519.8,394.0" fill="none" stroke="#dc0a2e" stroke-width="2.9"/>
<circle cx="503.0" cy="393.0" r="2.0" fill="#dc0a2e"/>
<polyline points="504.0,399.0 509.0,402.0" fill="none" stroke="#3a0610" stroke-width="2.7"/>
<polyline points="504.0,399.0 509.0,402.0" fill="none" stroke="#dc0a2e" stroke-width="1.7"/>
<circle cx="588.0" cy="362.0" r="0.8" fill="#dc0a2e"/>
<polyline points="580.5,352.0 580.5,356.5" fill="none" stroke="#3a0610" stroke-width="1.7"/>
<polyline points="580.5,352.0 580.5,356.5" fill="none" stroke="#dc0a2e" stroke-width="0.7"/></g></svg>
<!-- browser panel -->
<div class="t" style="left:2px;top:109.5px;font-size:8.5px;color:#222">Browser</div>
<div class="a w" style="left:0;top:139px;width:207px;height:181px;border-top:1px solid #b1b1af"></div>
<div class="a" style="left:197px;top:140px;width:10px;height:171px;background:#f6f6f5;border-left:1px solid #e2e2e0"></div>
<div class="a" style="left:198px;top:219px;width:8px;height:84px;background:#dededc;border:1px solid #d2d2d0"></div>
<div class="a" style="left:0;top:311px;width:197px;height:9px;background:#f6f6f5;border-top:1px solid #e2e2e0"></div>
<div class="a" style="left:165px;top:312px;width:22px;height:7px;background:#dededc;border:1px solid #d2d2d0"></div>
<div class="tri-u" style="left:199px;top:143px"></div><div class="tri-d" style="left:199px;top:306px"></div>
<div class="tri-l" style="left:2px;top:313px"></div><div class="tri-r" style="left:192px;top:313px"></div>
<div class="bt" style="top:142px">
<div class="t" style="left:26.5px;top:0.00px">Favorites</div>
<div class="t" style="left:37px;top:11.65px">/home/isunni/dev/cpp/QGIS/tests/testdata</div>
<div class="t" style="left:37px;top:23.30px">/home/isunni/dev/cpp/QGIS/tests/testdata</div>
<div class="t" style="left:37px;top:34.95px">/home/isunni/Documents/project/Alsi2 ro</div>
<div class="t" style="left:37px;top:46.60px">/home/isunni/Documents/qgis/data</div>
<div class="t" style="left:26.5px;top:58.25px">Spatial Bookmarks</div>
<div class="t" style="left:26.5px;top:69.90px">Project Home</div>
<div class="t" style="left:26.5px;top:81.55px">Home</div>
<div class="t" style="left:26.5px;top:93.20px">/ (root)</div>
<div class="t" style="left:26.5px;top:104.85px">GeoPackage</div>
<div class="t" style="left:26.5px;top:116.50px">SpatiaLite</div>
<div class="t" style="left:26.5px;top:128.15px">PostgreSQL</div>
<div class="t" style="left:26.5px;top:139.80px">MS SQL Server</div>
<div class="t" style="left:26.5px;top:151.45px">WMS/WMTS</div>
<div class="t" style="left:26.5px;top:163.10px">Vector Tiles</div>
</div>
<div class="a" style="left:0;top:311px;width:197px;height:1px;background:#e2e2e0"></div><div class="a" style="left:197px;top:311px;width:10px;height:9px;background:#efefee"></div>

<!-- layers panel -->
<div class="t" style="left:2px;top:327px;font-size:8.5px;color:#222">Layers</div>
<div class="a" style="left:2px;top:339px;width:16px;height:16px;background:#dcdcda;border:1px solid #c6c6c4;border-radius:2px"></div>
<div class="a w" style="left:0;top:357px;width:207px;height:255px;border-right:1px solid #d9d9d7"></div>
<div class="a" style="left:0;top:404px;width:206px;height:11.5px;background:#308cc6"></div>
<div class="cb" style="left:15px;top:359px"></div>
<div class="cb" style="left:15px;top:370px"><i>&#10003;</i></div>
<div class="cb" style="left:28px;top:382px"></div>
<div class="cb" style="left:28px;top:394px"></div>
<div class="cb" style="left:28px;top:405.5px;background:#fff"><i>&#10003;</i></div>
<div class="cb" style="left:15px;top:417px"></div>
<div class="t" style="left:42px;top:358.5px;font-style:italic;color:#6a6a6a">POI</div>
<div class="t" style="left:42px;top:370.3px;color:#111">3D</div>
<div class="t" style="left:54px;top:381.8px;font-style:italic;font-weight:bold;color:#6a6a6a">3d-point</div>
<div class="t" style="left:55px;top:393.5px;font-style:italic;font-weight:bold;color:#6a6a6a">3d-line</div>
<div class="t" style="left:55px;top:405px;font-weight:bold;color:#fff;text-decoration:underline">3d-building</div>
<div class="t" style="left:42px;top:416.7px;font-style:italic;font-weight:bold;color:#6a6a6a">OpenStreetMap</div>
<div class="a" style="left:42px;top:405px;width:9px;height:9px;background:#dc0a2e;border:0.5px solid #600"></div>

<!-- log panel -->
<div class="t" style="left:212.5px;top:474.5px;font-size:8.5px;color:#222">Log Messages</div>
<div class="a" style="left:211px;top:486.5px;width:59px;height:18px;background:#e6e6e4;border:1px solid #cdcdcb;border-bottom:none"></div>
<div class="a" style="left:269px;top:486.5px;width:94px;height:18px;background:#e6e6e4;border:1px solid #cdcdcb;border-bottom:none"></div>
<div class="a w" style="left:362px;top:485px;width:62px;height:20px;border:1px solid #cdcdcb;border-bottom:none"></div>
<div class="t" style="left:218.5px;top:491.8px;font-size:8.2px">Plugins</div><div class="t" style="left:248.5px;top:490px;font-size:10px;font-weight:bold">&#10005;</div>
<div class="t" style="left:277px;top:491.3px;font-size:8.6px">Python warning</div><div class="t" style="left:342.5px;top:490px;font-size:10px;font-weight:bold">&#10005;</div>
<div class="t" style="left:370px;top:491.3px;font-size:8.3px">General</div><div class="t" style="left:404.5px;top:490px;font-size:10px;font-weight:bold">&#10005;</div>
<div class="a w" style="left:211px;top:504px;width:682px;height:106px;border:1px solid #a9a9a7"></div>
<div class="a" style="left:881px;top:505px;width:11px;height:104px;background:#f3f3f2;border-left:1px solid #e0e0de"></div>
<div class="a" style="left:882px;top:514px;width:9px;height:47px;background:#dcdcda;border:1px solid #d0d0ce"></div>
<div class="tri-u" style="left:883px;top:508px"></div><div class="tri-d" style="left:883px;top:603px"></div>
<div class="lg" style="left:249px;top:505.7px">
<div>/home/isunni/dev/cpp/build-QGIS-3.14-Ninja-Debug/output/data/svg/</div>
<div>/home/isunni/dev/cpp/QGIS-3.14/svg/</div>
<div>/usr/local/share/qgis/svg/</div>
<div>/home/isunni/.local/share/QGIS/QGIS3//profiles/default/svg/</div>
<div>/home/isunni/dev/cpp/build-QGIS-3.16-Ninja-Debug/output/data/svg/</div>
<div>/home/isunni/dev/cpp/QGIS-3.16/svg/</div>
<div>/usr/share/qgis/svg/</div>
<div style="margin-left:-2px">User DB Path: /home/isunni/dev/cpp/build-QGIS-Ninja-Debug/output/data/resources/qgis.db</div>
<div style="margin-left:-2px">Auth DB Path: /home/isunni/.local/share/QGIS/QGIS3/profiles/default/qgis-auth.db</div>
</div>

<!-- layer styling -->
<div class="t" style="left:899px;top:109.3px;color:#222">Layer Styling</div>
<div class="a" style="left:898.5px;top:121.5px;width:299.5px;height:15px;background:linear-gradient(#f6f6f5,#ededec);border:1px solid #c3c3c1;border-radius:2px"></div>
<div class="t" style="left:914.5px;top:124.8px;color:#444;font-size:8.9px">3d building</div>
<div class="dd" style="left:1189px;top:128px"></div>
<div class="a" style="left:925px;top:140.5px;width:273px;height:16px;background:linear-gradient(#f6f6f5,#ededec);border:1px solid #c3c3c1;border-radius:2px"></div>
<div class="t" style="left:941px;top:144.8px;color:#222;font-size:8.6px">Single Symbol</div>
<div class="dd" style="left:1189px;top:147.5px"></div>
<div class="a" style="left:898px;top:162px;width:25px;height:448px;background:#5b5a58"></div>
<div class="a" style="left:938px;top:183.3px;width:40px;height:38.5px;background:#dc0028;border:1px solid #5a0a10"></div>
<div class="a w" style="left:994px;top:168.5px;width:161px;height:67px;border:1px solid #b8b8b6"></div>
<div class="a" style="left:995px;top:169.5px;width:159px;height:11px;background:#308cc6"></div>
<div class="tri-d" style="left:998px;top:173px;border-top-color:#1a3a5a"></div>
<div class="a" style="left:1009px;top:169.5px;width:11px;height:11px;background:#dc0028;border:1px solid #602"></div>
<div class="t" style="left:1024px;top:170.8px;color:#fff;font-weight:bold">Fill</div>
<div class="a" style="left:1022px;top:181.5px;width:11px;height:11px;background:#dc0028;border:1px solid #602"></div>
<div class="t" style="left:1036px;top:182.6px;color:#222">Simple Fill</div>
<div class="btn" style="left:1158px;top:161px;width:19px;height:16px"></div>
<div class="btn" style="left:1181px;top:161px;width:19px;height:16px"></div>
<div class="btn" style="left:1158px;top:179px;width:19px;height:16px"></div>
<div class="btn" style="left:1181px;top:179px;width:19px;height:16px"></div>
<div class="btn" style="left:1158px;top:197px;width:19px;height:16px"></div>
<div class="btn" style="left:1181px;top:197px;width:19px;height:16px"></div>
<div class="a" style="left:925px;top:248.5px;width:275px;height:1px;background:#c4c4c2"></div>
<div class="t" style="left:925px;top:259.8px;color:#222;font-size:8.3px">Color</div>
<div class="a" style="left:959.5px;top:254px;width:233px;height:17px;background:#f6f6f5;border:1px solid #c0c0be;border-radius:2px"></div>
<div class="a" style="left:963px;top:258px;width:219px;height:10px;background:#dc0028;border-radius:1px"></div>
<div class="a" style="left:1185px;top:255px;width:1px;height:15px;background:#c8c8c6"></div>
<div class="tri-d" style="left:1187px;top:262px;border-top-color:#555"></div>
<div class="t" style="left:925px;top:280.8px;color:#222;font-size:8.6px">Opacity</div>
<div class="a" style="left:960px;top:283.5px;width:138px;height:3px;background:#3b8fd0;border:0.5px solid #2a6aa0;border-radius:1px"></div>
<div class="a" style="left:1094.5px;top:279.5px;width:7px;height:11px;background:#fafafa;border:1px solid #9a9a98;border-radius:2px"></div>
<div class="a w" style="left:1104px;top:279px;width:65px;height:13px;border:1px solid #c8c8c6;border-radius:2px"></div>
<div class="t" style="left:1108px;top:281px;font-size:8.5px;color:#333">100.0 %</div>
<div class="spin" style="left:1160px;top:280px"></div>
<div class="t" style="left:925px;top:300.8px;color:#222;font-size:8.3px">Unit</div>
<div class="a" style="left:959.5px;top:297px;width:233px;height:15px;background:#f4f4f3;border:1px solid #c3c3c1;border-radius:2px"></div>
<div class="t" style="left:963px;top:300.2px;color:#222">Millimeters</div>
<div class="dd" style="left:1183px;top:304px"></div>
<div class="a w" style="left:925px;top:318.5px;width:249px;height:15px;border:1px solid #c3c3c1;border-radius:2px"></div>
<div class="t" style="left:944px;top:321.8px;color:#222">All Symbols</div>
<div class="a" style="left:932px;top:322px;width:6px;height:6px;border:1px solid #777;border-radius:50%"></div>
<div class="a" style="left:1146.5px;top:323px;width:8px;height:6px;background:#9a9a98;border-radius:1px"></div>
<div class="dd" style="left:1163px;top:326px"></div>
<div class="a w" style="left:925px;top:337px;width:268px;height:209px;border:1px solid #cfcfcd"></div>
<div class="a" style="left:1183px;top:338px;width:10px;height:207px;background:#f3f3f2;border-left:1px solid #e0e0de"></div>
<div class="a" style="left:1184px;top:374px;width:8px;height:157px;background:#dedddb;border:1px solid #d2d2d0"></div>
<div class="tri-u" style="left:1185px;top:340px"></div><div class="tri-d" style="left:1185px;top:540px"></div>
<div class="sw" style="left:943.3px;top:345px;background:linear-gradient(135deg,#4a10b0 0%,#a02a9a 30%,#e0506a 60%,#f8a030 85%,#f8e020 100%);border-color:#3a2a2a"></div>
<div class="sw" style="left:1016px;top:345px;background:linear-gradient(180deg,#5a5a5a,#d8d8d8);border-color:#c8c890"></div>
<div class="sw" style="left:1088px;top:345px;background:linear-gradient(180deg,#3a78b0,#4aa0e0);border-color:#3a70a0"></div>
<div class="sw" style="left:943.3px;top:424px;background:linear-gradient(180deg,#5a1e12,#b05820);border-color:#a04030"></div>
<div class="sw" style="left:1016px;top:424px;background:linear-gradient(180deg,#3aa83a,#5ade5a);border-color:#38a038"></div>
<div class="sw" style="left:1088px;top:424px;background:linear-gradient(180deg,#c86410,#eca828);border-color:#b06010"></div>
<div class="sw" style="left:943.3px;top:503.3px;background:linear-gradient(180deg,#d070b8,#e8a0d0);border-color:#c070b0"></div>
<div class="sw" style="left:1016px;top:503.3px;background:linear-gradient(180deg,#5a2a80,#a048b0);border-color:#7a4aa0"></div>
<div class="sw" style="left:1088px;top:503.3px;background:linear-gradient(180deg,#b0001a,#e81030);border-color:#a01020"></div>
<div class="t" style="left:928px;top:386.6px;color:#222">gradient &nbsp; plasma</div>
<div class="t" style="left:1001px;top:386.6px;color:#222">gradient &nbsp;gray fill</div>
<div class="t" style="left:1075px;top:386.6px;color:#222">gradient blue fill</div>
<div class="t c" style="left:962px;top:465.5px;color:#222">gradient brown<br>fill</div>
<div class="t c" style="left:1034.5px;top:465.5px;color:#222">gradient green<br>fill</div>
<div class="t c" style="left:1106.5px;top:465.5px;color:#222">gradient orange<br>fill</div>
<div class="btn" style="left:925px;top:550px;width:15px;height:15px;background:#dcdcda"></div>
<div class="btn" style="left:1074px;top:550.5px;width:62px;height:14.5px"></div>
<div class="t" style="left:1076.5px;top:553.3px;font-size:8.7px;color:#222">Save Symbol...</div>
<div class="btn" style="left:1141px;top:550.5px;width:51px;height:14.5px"></div>
<div class="t" style="left:1143px;top:553.3px;font-size:8.3px;color:#222">Advanced</div>
<div class="dd" style="left:1184px;top:557px;border-top-color:#999"></div>
<div class="tri-r" style="left:928px;top:580px;border-left-color:#111;border-width:3.5px 0 3.5px 5px"></div>
<div class="t" style="left:940px;top:579.6px;font-weight:bold;color:#111">Layer Rendering</div>
<div class="btn" style="left:925px;top:594px;width:15px;height:14.5px"></div>
<div class="btn" style="left:944px;top:594px;width:15px;height:14.5px"></div>
<div class="cb" style="left:1081px;top:598px;width:9px;height:9px;background:#fff"><i style="font-size:8px">&#10003;</i></div>
<div class="t" style="left:1094px;top:598px;color:#222;font-size:8.5px">Live update</div>
<div class="btn" style="left:1147px;top:594.5px;width:51px;height:14.5px"></div>
<div class="t" style="left:1167px;top:597.8px;color:#222;font-size:8.4px">Apply</div>

<!-- status bar -->
<div class="a w" style="left:2px;top:614px;width:160px;height:14px;border:1px solid #c5c5c3;border-radius:2px"></div>
<div class="a" style="left:7px;top:617px;width:6px;height:6px;border:1px solid #888;border-radius:50%"></div>
<div class="t" style="left:21px;top:616.8px;font-size:8.9px;color:#9a9a9a">Type to locate (Ctrl+K)</div>
<div class="a" style="left:163px;top:614px;width:1px;height:14px;background:#d0d0ce"></div>
<div class="t st" style="left:168px;top:617.5px">0 features selected on layer 3d-building</div>
<div class="t st" style="left:672px;top:617.5px">Coordinate</div>
<div class="a w" style="left:707px;top:614px;width:62px;height:14px;border:1px solid #c8c8c6;border-radius:2px"></div>
<div class="t" style="left:711px;top:617.5px;font-size:7px;color:#222">405625.5756350</div>
<div class="t st" style="left:790px;top:617.5px">Scale</div>
<div class="a w" style="left:810px;top:614px;width:60px;height:14px;border:1px solid #c8c8c6;border-radius:2px"></div>
<div class="t" style="left:812px;top:617.5px;font-size:7px;color:#555">1:8076</div>
<div class="dd" style="left:863px;top:620px"></div>
<div class="a" style="left:878.5px;top:619px;width:8px;height:7px;background:#6a6a6a;border-radius:1px"></div>
<div class="a" style="left:880px;top:615px;width:5px;height:6px;border:1.3px solid #6a6a6a;border-bottom:none;border-radius:3px 3px 0 0"></div>
<div class="t st" style="left:892px;top:617.5px">Magnifier</div>
<div class="a w" style="left:922px;top:614.5px;width:62px;height:14px;border:1px solid #c8c8c6;border-radius:2px"></div>
<div class="t" style="left:926px;top:617.5px;font-size:7px;color:#555">100%</div>
<div class="spin" style="left:975px;top:616px"></div>
<div class="t st" style="left:990px;top:617.5px">Rotation</div>
<div class="a w" style="left:1020.5px;top:614.5px;width:59px;height:14px;border:1px solid #c8c8c6;border-radius:2px"></div>
<div class="t" style="left:1024px;top:617.5px;font-size:7px;color:#555">0.0 °</div>
<div class="spin" style="left:1071px;top:616px"></div>
<div class="cb" style="left:1083px;top:617px;background:#fff"><i>&#10003;</i></div>
<div class="t st" style="left:1095px;top:617.5px">Render</div>
<div class="a" style="left:1127.5px;top:617px;width:8px;height:8px;border:1px solid #777;border-radius:50%"></div>
<div class="t st" style="left:1139px;top:617.5px">EPSG:7844</div>
<div class="a" style="left:1182px;top:613px;width:18px;height:16px;background:#d6d6d4;border:1px solid #c8c8c6"></div>
<div class="a" style="left:1185px;top:616px;width:12px;height:9px;background:#888;border-radius:50%"></div>

<svg class="a" style="left:0;top:0" width="1200" height="648" viewBox="0 0 1200 648"><path d="M4.5 124v9" stroke="#777" stroke-width="1"/><path d="M12.5 125v6" stroke="#555" stroke-width="0.8"/><rect x="10" y="130" width="5" height="4" fill="#4caf50"/>
<path d="M21 128a4.5 4.5 0 0 1 8-2" stroke="#3b7fc4" stroke-width="2.3" fill="none"/><path d="M30 130a4.5 4.5 0 0 1-8 2" stroke="#3b7fc4" stroke-width="2.3" fill="none"/><path d="M27.5 123.5h3v3z M23.5 134.5h-3v-3z" fill="#3b7fc4"/>
<path d="M38 124h10l-4 5v5l-2 0v-5z" fill="#5b8fc9"/><rect x="38" y="124" width="10" height="1.5" fill="#f2d95a"/>
<rect x="54" y="125" width="5" height="8" fill="none" stroke="#888" stroke-width="0.8"/><rect x="54" y="129" width="3" height="3" fill="#f09030"/><path d="M61 134v-8M58 128l3-3l3 3" stroke="#3b6fb0" stroke-width="1.6" fill="none"/>
<circle cx="74.5" cy="129" r="4.7" fill="#5b8fc9"/><rect x="74" y="128" width="1.4" height="4" fill="#fff"/><rect x="74" y="125.8" width="1.4" height="1.3" fill="#fff"/>
<path d="M2.5 145.2h5l-2.5 2.5z" fill="#333"/>
<polygon points="17.5,141.4 18.8,144.6 22.3,144.9 19.6,147.1 20.4,150.4 17.5,148.7 14.6,150.4 15.4,147.1 12.7,144.9 16.2,144.6" fill="#f8e840" stroke="#c8b020" stroke-width="0.7"/>
<path d="M14.0 155.6l3 2.5l-3 2.5z" fill="#333"/>
<path d="M23.0 153.6h3l1 1.5h5v7.5h-9z" fill="#f4f4f2" stroke="#8a8a88" stroke-width="0.8"/>
<path d="M14.0 167.2l3 2.5l-3 2.5z" fill="#333"/>
<path d="M23.0 165.2h3l1 1.5h5v7.5h-9z" fill="#f4f4f2" stroke="#8a8a88" stroke-width="0.8"/>
<path d="M14.0 178.9l3 2.5l-3 2.5z" fill="#333"/>
<path d="M23.0 176.9h3l1 1.5h5v7.5h-9z" fill="#f4f4f2" stroke="#8a8a88" stroke-width="0.8"/>
<path d="M14.0 190.5l3 2.5l-3 2.5z" fill="#333"/>
<path d="M23.0 188.5h3l1 1.5h5v7.5h-9z" fill="#f4f4f2" stroke="#8a8a88" stroke-width="0.8"/>
<path d="M3.5 202.2l3 2.5l-3 2.5z" fill="#333"/>
<path d="M3.5 213.8l3 2.5l-3 2.5z" fill="#333"/>
<path d="M3.5 225.4l3 2.5l-3 2.5z" fill="#333"/>
<path d="M3.5 237.1l3 2.5l-3 2.5z" fill="#333"/>
<path d="M3.5 272.1l3 2.5l-3 2.5z" fill="#333"/>
<path d="M3.5 295.4l3 2.5l-3 2.5z" fill="#333"/>
<rect x="13" y="200.2" width="9" height="9" fill="#eee" stroke="#999" stroke-width="0.8"/><rect x="18" y="199.7" width="2.5" height="5" fill="#3b6fb0"/>
<rect x="13" y="211.8" width="9" height="9" fill="#4caf50" stroke="#777" stroke-width="0.6"/><path d="M14 216.3l3 2l2-3l2 2" stroke="#f2d95a" stroke-width="1.2" fill="none"/>
<rect x="13" y="223.4" width="9" height="9" fill="#fafafa" stroke="#888" stroke-width="0.8"/><path d="M15 228.4l2.5-2.5l2.5 2.5v2.5h-5z" fill="none" stroke="#777" stroke-width="0.7"/>
<path d="M13.0 235.1h3l1 1.5h5v7.5h-9z" fill="#f4f4f2" stroke="#8a8a88" stroke-width="0.8"/>
<circle cx="17.5" cy="251.2" r="4.8" fill="#f2d040" stroke="#8a7010" stroke-width="0.6"/><path d="M13 250.8a4.8 4.8 0 0 1 9 -1z" fill="#5b8fc9"/>
<path d="M12.5 267.9c2-5 5-8 9-9c-1 4-4 7-9 9z" fill="#5b8fc9" stroke="#3b679e" stroke-width="0.6"/>
<path d="M13 273.6c0-3 3-4 6-4c3 0 4 2 3 5c-1 2-2 3-2 5h-2v-3h-2v3h-2c0-2-1-3-1-6z" fill="#6b95c8" stroke="#3b679e" stroke-width="0.6"/>
<path d="M13 284.2c2-2 5-2 7 0l3 1l-3 1c-2 2-3 3-3 5h-2v-3z" fill="#6b95c8" stroke="#3b679e" stroke-width="0.5"/>
<circle cx="17.5" cy="297.9" r="4.7" fill="#7ea6d6" stroke="#3b679e" stroke-width="0.6"/><path d="M13 297.9h9M17.5 293.4v9" stroke="#dde" stroke-width="0.6"/>
<rect x="13" y="305.0" width="9" height="7" fill="#eee" stroke="#666" stroke-width="0.7"/><path d="M13 308.0h9M16 305.0v7M19 305.0v7" stroke="#666" stroke-width="0.6"/>
<path d="M98 322.5h14" stroke="#c8c8c6" stroke-width="0.8" stroke-dasharray="1 1"/>
<path d="M5 348l3 3l6-8" stroke="#e8a030" stroke-width="2" fill="none"/><path d="M5 348l3 3" stroke="#d04040" stroke-width="2"/><rect x="4" y="349" width="4" height="3" fill="#3b6fb0" opacity="0.6"/>
<path d="M22 343h5l1 1v8h-6z" fill="#fff" stroke="#666" stroke-width="0.7"/><path d="M29 342v4M27 344h4" stroke="#666" stroke-width="0.7"/><rect x="26" y="350" width="4" height="3" fill="#4caf50"/>
<ellipse cx="42" cy="347" rx="5" ry="3" fill="#dde6f0" stroke="#555" stroke-width="0.8"/><circle cx="42" cy="347" r="1.6" fill="#3b6fb0"/><path d="M45 351h3l-1.5 1.5z" fill="#333"/>
<path d="M53 342h10l-4 5v5h-2v-5z" fill="#5b8fc9"/><rect x="53" y="342" width="10" height="1.5" fill="#f2d95a"/><rect x="62" y="351" width="2" height="2" fill="#333"/>
<path d="M70 342v11M70 343h4M70 347h3" stroke="#9a3a9a" stroke-width="1"/><rect x="75" y="346" width="5" height="7" fill="#ccc" stroke="#888" stroke-width="0.5"/><path d="M85 346h5l-2.5 2.5z" fill="#444"/>
<path d="M95 343h10M95 352h10M100 342v11M98 349l2 2l2-2" stroke="#555" stroke-width="1" fill="none"/><rect x="95" y="345" width="3" height="5" fill="#e8a030"/>
<rect x="110" y="343" width="8" height="9" fill="#fff" stroke="#666" stroke-width="0.7"/><path d="M115 352v-10M112 345l3-3l3 3" stroke="#3b6fb0" stroke-width="1.4" fill="none"/><rect x="110" y="347" width="3" height="3" fill="#e8a030"/>
<path d="M127 342v11h8" stroke="#777" stroke-width="1" fill="none"/><rect x="131" y="349" width="5" height="4" fill="none" stroke="#d02020" stroke-width="1"/>
<circle cx="33" cy="363" r="2" fill="#8ab030" stroke="#c8a020" stroke-width="1"/>
<path d="M31 371h3l1 1h2v6h-6z" fill="#f4f4f2" stroke="#555" stroke-width="0.8"/>
<path d="M3.5 373.8h5l-2.5 2.5z" fill="#333"/>
<path d="M45 383l2 3l-2 4l-2-4z" fill="#3b8fd0"/><circle cx="45" cy="389" r="1.2" fill="#8ac"/>
<path d="M41 398h10" stroke="#b08ac0" stroke-width="1"/>
<path d="M3.5 419.8h5l-2.5 2.5z" fill="#333"/>
<rect x="29" y="417" width="9" height="9" fill="#c8d4e0"/><rect x="29" y="417" width="3" height="3" fill="#333"/><rect x="35" y="420" width="3" height="3" fill="#333"/><rect x="32" y="423" width="3" height="3" fill="#556"/><rect x="32" y="417" width="3" height="3" fill="#8aa"/>
<path d="M908 151l7-6l2 2l-6 7z" fill="#e8c040" stroke="#8a6a10" stroke-width="0.5"/><path d="M903 153c1-4 4-5 7-3l1 3c-2 3-6 3-8 0z" fill="#e04030"/><path d="M905 151l4 3" stroke="#f0d040" stroke-width="1.2"/><circle cx="906" cy="151.5" r="1.2" fill="#3b8fd0"/>
<path d="M930 143h6v3h2v3h-2v3h-6v-3h2v-3h-2z" fill="#22b040" stroke="#116020" stroke-width="0.6"/>
<path d="M902 171l3-4h10v8h-10z" fill="#f0e060" stroke="#333" stroke-width="0.7"/><text x="905.5" y="174" font-family="Liberation Sans" font-size="6" font-weight="bold" fill="#222">abc</text>
<text x="900.5" y="195.5" font-family="Liberation Sans" font-size="9" font-weight="bold" fill="#fff" stroke="#222" stroke-width="1.6" paint-order="stroke">abc</text>
<path d="M902 209l6-3l7 3v6l-7 3l-6-3z" fill="#e8d040"/><path d="M902 209l6 3l7-3l-7-3z" fill="#e04050"/><path d="M902 209v6l6 3v-6z" fill="#4cb040"/>
<rect x="902" y="234" width="5" height="7" fill="#f0d840"/><rect x="909" y="234" width="6" height="7" fill="#7aaedc"/><path d="M904 228v6M913 228v6M904 230h9" stroke="#d04060" stroke-width="1.3"/>
<path d="M903 253l4-3v2h3v2h-3v2z" fill="#6ab84a"/><path d="M915 256l-4 3v-2h-3v-2h3v-2z" fill="#e88040"/>
<rect x="1163" y="166" width="7" height="7" fill="#4caf50"/><path d="M1166.5 164v11M1161 169.5h11" stroke="#2a7a2a" stroke-width="1.5"/>
<path d="M1186 173l4.5-7l4.5 7z" fill="#d8d8d6"/><path d="M1186 184l4.5 7l4.5-7z" fill="#d8d8d6"/>
<rect x="1162" y="186" width="11" height="2" fill="#d8d8d6"/>
<rect x="1163" y="200" width="9" height="10" fill="none" stroke="#d0d0ce" stroke-width="0.8"/><rect x="1186" y="203" width="9" height="7" fill="#e6e6e4" stroke="#d0d0ce" stroke-width="0.7"/><path d="M1188 203v-2a2.5 2.5 0 0 1 5 0" stroke="#d0d0ce" fill="none"/>
<path d="M1176 285h6M1179 282l-3 3l3 3M1182 281h6v9h-6M1188 290v2" stroke="#555" stroke-width="0.9" fill="none"/>
<path d="M1161.5 283.5l2-2l2 2M1161.5 287.5l2 2l2-2" stroke="#666" stroke-width="0.8" fill="none"/>
<path d="M976.5 620.0l2-2l2 2M976.5 624.0l2 2l2-2" stroke="#666" stroke-width="0.8" fill="none"/>
<path d="M1072.5 620.0l2-2l2 2M1072.5 624.0l2 2l2-2" stroke="#666" stroke-width="0.8" fill="none"/>
<path d="M1159.5 280v11" stroke="#ddd" stroke-width="0.8"/>
<path d="M938 329l2.5 2.5" stroke="#777" stroke-width="1"/>
<rect x="1181" y="321" width="3" height="3" fill="#d04030"/><rect x="1181" y="328" width="3" height="3" fill="#4caf50"/><path d="M1185 331l5-9" stroke="#3b6fb0" stroke-width="1.2"/>
<path d="M929 554h7M929 557h7M929 560h7M930 553v8M932.5 553v8M935 553v8" stroke="#5b8fc9" stroke-width="0.9" stroke-dasharray="1 1.5"/>
<rect x="944" y="553" width="9" height="9" fill="#dde8f5" stroke="#7aa0c8" stroke-width="0.7"/><path d="M944 556h9M947 553v9" stroke="#7aa0c8" stroke-width="0.6"/>
<path d="M929 601c1-3 4-3 6-1l1 3" stroke="#e87a30" stroke-width="2" fill="none"/><path d="M928 598l1 4l3-2z" fill="#e87a30"/>
<path d="M955 601c-1-3-4-3-6-1l-1 3" stroke="#5ab040" stroke-width="2" fill="none"/><path d="M956 598l-1 4l-3-2z" fill="#5ab040"/>
<path d="M1157 601l3 4l5-8" stroke="#4aa040" stroke-width="1.8" fill="none"/>
<path d="M774 616l6 6M780 616l-6 6" stroke="#555" stroke-width="1"/><circle cx="777" cy="624" r="2.5" fill="none" stroke="#555" stroke-width="0.8"/>
<path d="M902 125h9a1.5 1.5 0 0 1 1.5 1.5v4a1.5 1.5 0 0 1-1.5 1.5h-5l-2 2v-2h-2a1.5 1.5 0 0 1-1.5-1.5v-4a1.5 1.5 0 0 1 1.5-1.5z" fill="#e8e8e6" stroke="#9a9a98" stroke-width="0.7"/>
<path d="M190.0 116.5v-6h3M190.0 116.0h6v-3" stroke="#5a5a5a" stroke-width="0.9" fill="none"/><path d="M191.0 115.0l4-4M192.5 111.0h2.5v2.5" stroke="#5a5a5a" stroke-width="0.9" fill="none"/>
<path d="M199.0 116.5v-6M199.0 116.0h6.5v-6" stroke="#5a5a5a" stroke-width="0.9" fill="none"/><path d="M199.5 110.5l5 5M205.0 110.5l-5 5" stroke="#5a5a5a" stroke-width="0.9"/>
<path d="M190.0 334.0v-6h3M190.0 333.5h6v-3" stroke="#5a5a5a" stroke-width="0.9" fill="none"/><path d="M191.0 332.5l4-4M192.5 328.5h2.5v2.5" stroke="#5a5a5a" stroke-width="0.9" fill="none"/>
<path d="M199.0 334.0v-6M199.0 333.5h6.5v-6" stroke="#5a5a5a" stroke-width="0.9" fill="none"/><path d="M199.5 328.0l5 5M205.0 328.0l-5 5" stroke="#5a5a5a" stroke-width="0.9"/>
<path d="M875.0 482.0v-6h3M875.0 481.5h6v-3" stroke="#5a5a5a" stroke-width="0.9" fill="none"/><path d="M876.0 480.5l4-4M877.5 476.5h2.5v2.5" stroke="#5a5a5a" stroke-width="0.9" fill="none"/>
<path d="M884.0 482.0v-6M884.0 481.5h6.5v-6" stroke="#5a5a5a" stroke-width="0.9" fill="none"/><path d="M884.5 476.0l5 5M890.0 476.0l-5 5" stroke="#5a5a5a" stroke-width="0.9"/>
<path d="M1183.5 116.5v-6h3M1183.5 116.0h6v-3" stroke="#5a5a5a" stroke-width="0.9" fill="none"/><path d="M1184.5 115.0l4-4M1186.0 111.0h2.5v2.5" stroke="#5a5a5a" stroke-width="0.9" fill="none"/>
<path d="M1192.5 116.5v-6M1192.5 116.0h6.5v-6" stroke="#5a5a5a" stroke-width="0.9" fill="none"/><path d="M1193.0 110.5l5 5M1198.5 110.5l-5 5" stroke="#5a5a5a" stroke-width="0.9"/></svg>
<!-- taskbar -->
<div class="a" style="left:0;top:629px;width:1200px;height:19px;background:#050505"></div>
<div class="tb" style="left:0px;width:73px"></div>
<div class="t" style="left:1px;top:637.5px;font-size:9px;color:#d8d8d8">| * lutra consult...</div>
<div class="tb" style="left:77px;width:118px"></div>
<div class="a" style="left:81px;top:635px;width:13px;height:13px;border-radius:50%;background:conic-gradient(from -30deg,#d93025 0 120deg,#f4c20d 120deg 240deg,#1e9e4a 240deg 360deg)"></div><div class="a" style="left:84.0px;top:638px;width:7px;height:7px;border-radius:50%;background:#4a86e8;border:1px solid #fff"></div>
<div class="t" style="left:99px;top:637.5px;font-size:9px;color:#d8d8d8">Angular - Google Chr...</div>
<div class="tb" style="left:199px;width:118px"></div>
<div class="a" style="left:203px;top:634px;width:12px;height:13px;background:#e8e8e4;border:1px solid #8a8a80;border-radius:2px"></div>
<div class="t" style="left:221px;top:637.5px;font-size:9px;color:#d8d8d8">Peek</div>
<div class="tb" style="left:321px;width:118px"></div>
<div class="a" style="left:324px;top:636px;width:14px;height:10px;background:#41cd52"></div><div class="t" style="left:326px;top:637px;font-size:7px;color:#fff">QC</div>
<div class="t" style="left:342px;top:637.5px;font-size:9px;color:#d8d8d8">qgsidentifyresultsdia...</div>
<div class="tb" style="left:443px;width:115px"></div>
<div class="a" style="left:446px;top:634px;width:13px;height:12px;background:#8a1020;border:1px solid #bbb"></div>
<div class="t" style="left:463px;top:637.5px;font-size:9px;color:#d8d8d8">/bin/bash</div>
<div class="tb" style="left:561px;width:117px"></div>
<svg class="a" style="left:566px;top:634px" width="12" height="13" viewBox="0 0 12 13"><path d="M9 0l3 1.5v10L9 13L3 7.5L1 9L0 8.5v-4L1 4l2 1.5zM9 3.5L5 6.5L9 9.5z" fill="#2a8ad8"/></svg>
<div class="t" style="left:583px;top:637.5px;font-size:9px;color:#d8d8d8">app.component.ts - h...</div>
<div class="tb" style="left:681px;width:117px"></div>
<svg class="a" style="left:687px;top:634px" width="12" height="13" viewBox="0 0 12 13"><path d="M9 0l3 1.5v10L9 13L3 7.5L1 9L0 8.5v-4L1 4l2 1.5zM9 3.5L5 6.5L9 9.5z" fill="#2a8ad8"/></svg>
<div class="t" style="left:704px;top:637.5px;font-size:9px;color:#d8d8d8">metadata.txt - encod...</div>
<div class="tb" style="left:801px;width:119px"></div>
<div class="a" style="left:806px;top:635px;width:13px;height:13px;border-radius:50%;background:conic-gradient(from -30deg,#d93025 0 120deg,#f4c20d 120deg 240deg,#1e9e4a 240deg 360deg)"></div><div class="a" style="left:809.0px;top:638px;width:7px;height:7px;border-radius:50%;background:#4a86e8;border:1px solid #fff"></div>
<div class="t" style="left:823px;top:637.5px;font-size:9px;color:#d8d8d8">Comparing qgis:mast...</div>
<div class="tb" style="left:923px;width:117px"></div>
<div class="a" style="left:927px;top:635px;width:13px;height:13px;border-radius:50%;background:conic-gradient(from -30deg,#d93025 0 120deg,#f4c20d 120deg 240deg,#1e9e4a 240deg 360deg)"></div><div class="a" style="left:930.0px;top:638px;width:7px;height:7px;border-radius:50%;background:#4a86e8;border:1px solid #fff"></div>
<div class="t" style="left:945px;top:637.5px;font-size:9px;color:#d8d8d8">Delajar Ikhlas Dareng...</div>
<div class="tb" style="left:1044px;width:116px"></div>
<div class="a" style="left:1048px;top:634px;width:14px;height:14px;border-radius:50%;border:2.5px solid #8ac43f;background:#222"></div><div class="a" style="left:1053px;top:639px;width:6px;height:3px;background:#e87040;transform:rotate(40deg)"></div>
<div class="t" style="left:1065px;top:637.5px;font-size:9px;color:#d8d8d8">*3d-buildings — QGI...</div>
<div class="a" style="left:1170px;top:630px;width:23px;height:18px;background:#3c3c3c;border:1px solid #5a5a5a"></div><div class="t" style="left:1173px;top:633.5px;font-size:10.5px;color:#e0e0e0;letter-spacing:0.5px">1/2</div>
</body></html>
